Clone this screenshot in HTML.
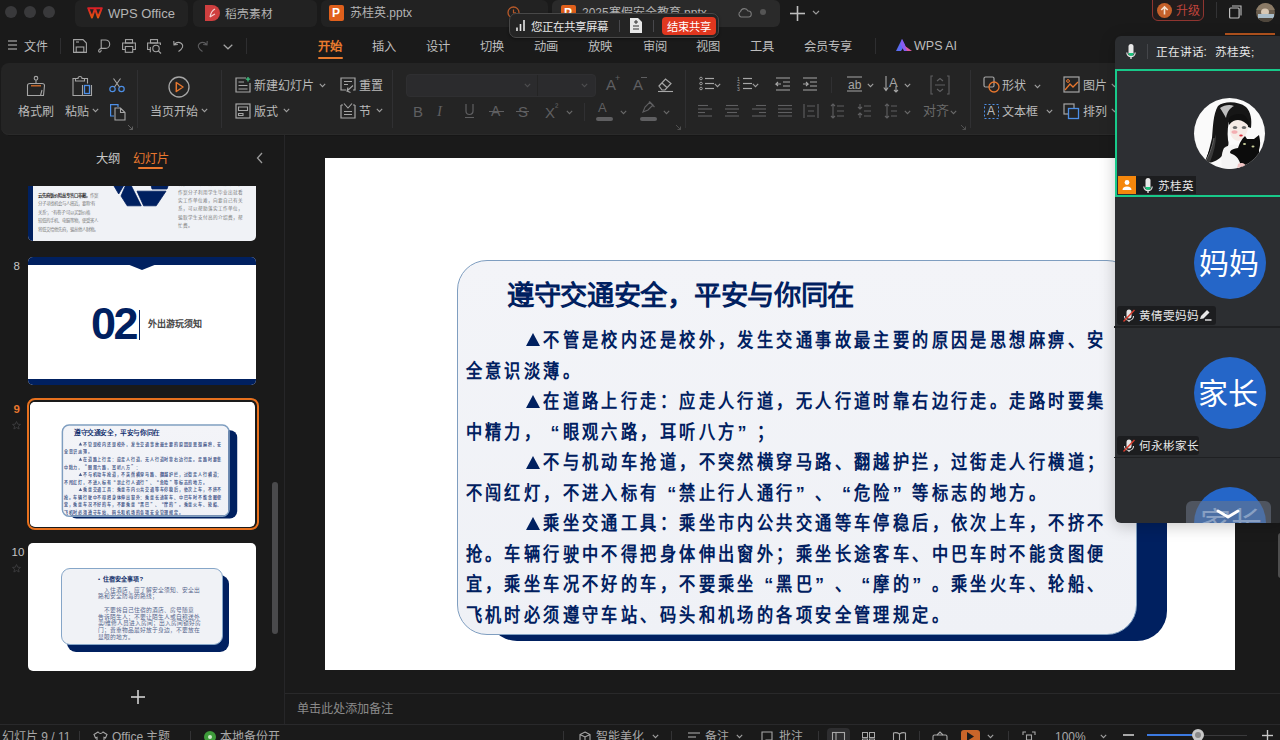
<!DOCTYPE html>
<html lang="zh-CN"><head><meta charset="utf-8">
<style>
*{box-sizing:border-box;margin:0;padding:0}
html,body{width:1280px;height:740px;overflow:hidden;background:#1a1a1a;font-family:"Liberation Sans",sans-serif;color:#c8c8c8}
.a{position:absolute}
.t{position:absolute;white-space:nowrap;line-height:1}
svg{position:absolute;overflow:visible}
.sl{position:absolute;left:0;top:0;width:910px;height:512px;background:#fff;overflow:hidden}
.ch{display:inline-block;text-align:left}
</style></head><body>
<div class="a" style="left:5px;top:6px;width:12px;height:12px;border-radius:50%;background:#39393b"></div><div class="a" style="left:24px;top:6px;width:12px;height:12px;border-radius:50%;background:#39393b"></div><div class="a" style="left:43px;top:6px;width:12px;height:12px;border-radius:50%;background:#39393b"></div><div class="a" style="left:75px;top:0px;width:113px;height:27px;background:#222222;border-radius:6px"></div><div class="a" style="left:193px;top:0px;width:124px;height:27px;background:#222222;border-radius:6px"></div><div class="a" style="left:321px;top:0px;width:227px;height:27px;background:#222222;border-radius:6px"></div><div class="a" style="left:552px;top:0px;width:228px;height:27px;background:#2a2a2a;border-radius:6px"></div><svg style="left:87px;top:7px;" width="16" height="12" viewBox="0 0 16 12" fill="none"><defs><linearGradient id="wg" x1="0" y1="0" x2="0" y2="1"><stop offset="0" stop-color="#d91f26"/><stop offset="1" stop-color="#e0560f"/></linearGradient></defs><path d="M1.2 1.2 H14.8 M1.2 1.2 L5 10.5 L8 1.6 M8 1.6 L11 10.5 L14.8 1.2" stroke="url(#wg)" stroke-width="2" stroke-linejoin="round" stroke-linecap="round"/></svg><div class="t" style="left:108px;top:7px;font-size:13px;color:#b4b4b4;font-weight:normal;">WPS Office</div><svg style="left:205px;top:5px;" width="15" height="16" viewBox="0 0 15 16" fill="none"><path d="M0 0 H7 A8 8 0 0 1 7 16 H0 Z" fill="#cf3f3f"/><path d="M5 12 Q6 6 10 4 M5 12 Q8 10 10 9" stroke="#f5d0d0" stroke-width="1.2"/></svg><div class="t" style="left:225px;top:8px;font-size:11.7px;color:#b4b4b4;font-weight:normal;">稻壳素材</div><div class="a" style="left:329px;top:5px;width:15px;height:16px;background:#e0601c;border-radius:2px"></div><div class="t" style="left:332px;top:7px;font-size:12px;color:#fff;font-weight:bold;">P</div><div class="t" style="left:350px;top:7px;font-size:12px;color:#b4b4b4;font-weight:normal;">苏桂英.pptx</div><svg style="left:507px;top:6px;" width="13" height="13" viewBox="0 0 13 13" fill="none"><circle cx="6.5" cy="6.5" r="5.5" stroke="#b85a2a" stroke-width="1.3"/><path d="M6.5 3.5 V6.8 H9" stroke="#b85a2a" stroke-width="1.2"/></svg><div class="a" style="left:561px;top:5px;width:15px;height:16px;background:#e0601c;border-radius:2px"></div><div class="t" style="left:564px;top:7px;font-size:12px;color:#fff;font-weight:bold;">P</div><div class="t" style="left:582px;top:7px;font-size:12px;color:#b4b4b4;font-weight:normal;">2025寒假安全教育.pptx</div><svg style="left:737px;top:7px;" width="15" height="11" viewBox="0 0 15 11" fill="none"><path d="M4 10 H11.5 A3 3 0 0 0 11 4 A4 4 0 0 0 3.5 4.5 A3 3 0 0 0 4 10 Z" stroke="#7a7a7a" stroke-width="1.1"/></svg><div class="a" style="left:760px;top:9px;width:6px;height:6px;border-radius:50%;background:#555"></div><svg style="left:790px;top:6px;" width="15" height="15" viewBox="0 0 15 15" fill="none"><line x1="7.5" y1="0" x2="7.5" y2="15" stroke="#bdbdbd" stroke-width="1.6"/><line x1="0" y1="7.5" x2="15" y2="7.5" stroke="#bdbdbd" stroke-width="1.6"/></svg><svg style="left:812px;top:10px;" width="8" height="5" viewBox="0 0 8 5" fill="none"><path d="M1 1 L4 4 L7 1" stroke="#9a9a9a" stroke-width="1.2"/></svg><div class="a" style="left:1152px;top:-6px;width:52px;height:27px;border:1.3px solid #8f3530;border-radius:6px;background:#221c1c"></div><div class="a" style="left:1157px;top:3px;width:15px;height:15px;border-radius:50%;background:#c4602a"></div><svg style="left:1159px;top:5px;" width="11" height="11" viewBox="0 0 11 11" fill="none"><path d="M5.5 9.5 V2 M2.3 5 L5.5 1.8 L8.7 5" stroke="#f3e0d0" stroke-width="1.6"/></svg><div class="t" style="left:1176px;top:4.5px;font-size:12px;color:#c0443c;font-weight:normal;">升级</div><div class="a" style="left:1216px;top:2px;width:1px;height:16px;background:#333335;"></div><svg style="left:1229px;top:5px;" width="13" height="14" viewBox="0 0 13 14" fill="none"><rect x="0.6" y="3" width="9.5" height="10" rx="1" stroke="#c0c0c0" stroke-width="1.2"/><path d="M3 1 H12 V10.5" stroke="#c0c0c0" stroke-width="1.1"/></svg><svg style="left:1256px;top:2.5px" width="19" height="19" viewBox="0 0 19 19"><defs><clipPath id="av"><circle cx="9.5" cy="9.5" r="9.5"/></clipPath></defs><g clip-path="url(#av)"><rect width="19" height="19" fill="#6b5e4e"/><rect y="0" width="19" height="7" fill="#8a7a66"/><ellipse cx="9" cy="9" rx="4" ry="3.5" fill="#d8c8b4"/><rect x="2" y="11" width="16" height="5" fill="#a9bcc8"/><rect y="15" width="19" height="4" fill="#4e463c"/></g></svg><svg style="left:8px;top:40px;" width="9" height="10" viewBox="0 0 9 10" fill="none"><line x1="0" y1="1" x2="9" y2="1" stroke="#a8a8a8" stroke-width="1.2"/><line x1="0" y1="5" x2="9" y2="5" stroke="#a8a8a8" stroke-width="1.2"/><line x1="0" y1="9" x2="9" y2="9" stroke="#a8a8a8" stroke-width="1.2"/></svg><div class="t" style="left:24px;top:41px;font-size:12px;color:#bdbdbd;font-weight:normal;">文件</div><div class="a" style="left:60px;top:38px;width:1px;height:16px;background:#2e2e30;"></div><svg style="left:73px;top:39px;" width="14" height="14" viewBox="0 0 14 14" fill="none"><path d="M0.6 0.6 H10 L13.4 4 V13.4 H0.6 Z" stroke="#a4a4a4" stroke-width="1.1"/><path d="M3 3 H6" stroke="#a4a4a4" stroke-width="1.1"/><rect x="3.2" y="8" width="7.6" height="5.4" stroke="#a4a4a4" stroke-width="1.1"/></svg><svg style="left:98px;top:39px;" width="13" height="14" viewBox="0 0 13 14" fill="none"><path d="M3.2 9.5 V1 H7.5 A4.2 4.2 0 0 1 7.5 9.4 H4.5 C1.5 9.4 0.3 11 0.7 12.3 C1.3 13.8 3.2 13.2 3.2 11" stroke="#a4a4a4" stroke-width="1.1"/></svg><svg style="left:122px;top:39px;" width="14" height="14" viewBox="0 0 14 14" fill="none"><rect x="3.5" y="0.6" width="7" height="3.4" stroke="#a4a4a4" stroke-width="1.1"/><path d="M3 10.5 H0.6 V4 H13.4 V10.5 H11" stroke="#a4a4a4" stroke-width="1.1"/><rect x="3.3" y="7.5" width="7.4" height="5.8" stroke="#a4a4a4" stroke-width="1.1"/></svg><svg style="left:147px;top:39px;" width="15" height="15" viewBox="0 0 15 15" fill="none"><rect x="3.5" y="0.6" width="7" height="3.4" stroke="#a4a4a4" stroke-width="1.1"/><path d="M3 10.5 H0.6 V4 H13.4 V6" stroke="#a4a4a4" stroke-width="1.1"/><path d="M3.3 13.3 V8" stroke="#a4a4a4" stroke-width="1.1"/><circle cx="9" cy="9.5" r="3.2" stroke="#a4a4a4" stroke-width="1.1"/><path d="M11.3 11.8 L14 14.5" stroke="#a4a4a4" stroke-width="1.2"/></svg><svg style="left:173px;top:40px;" width="11" height="12" viewBox="0 0 11 12" fill="none"><path d="M0.8 1 L1 5 L4.8 4.5 M1.2 4.6 C3 2.5 6 1.8 8.5 3.5 C10.8 5.5 10 8.5 5.5 11.5" stroke="#a4a4a4" stroke-width="1.1"/></svg><svg style="left:197px;top:40px;" width="11" height="12" viewBox="0 0 11 12" fill="none"><path d="M10.2 1 L10 5 L6.2 4.5 M9.8 4.6 C8 2.5 5 1.8 2.5 3.5 C0.2 5.5 1 8.5 5.5 11.5" stroke="#5c5c5e" stroke-width="1.1"/></svg><svg style="left:222.5px;top:43.5px;" width="10" height="6" viewBox="0 0 10 6" fill="none"><path d="M0.7 0.7 L5 4.8 L9.3 0.7" stroke="#a4a4a4" stroke-width="1.2"/></svg><div class="a" style="left:246px;top:38px;width:1px;height:16px;background:#2e2e30;"></div><div class="t" style="left:318px;top:41px;font-size:12.3px;color:#e87a2e;font-weight:bold;">开始</div><div class="t" style="left:372px;top:41px;font-size:12.3px;color:#bdbdbd;font-weight:normal;">插入</div><div class="t" style="left:426px;top:41px;font-size:12.3px;color:#bdbdbd;font-weight:normal;">设计</div><div class="t" style="left:480px;top:41px;font-size:12.3px;color:#bdbdbd;font-weight:normal;">切换</div><div class="t" style="left:534px;top:41px;font-size:12.3px;color:#bdbdbd;font-weight:normal;">动画</div><div class="t" style="left:588px;top:41px;font-size:12.3px;color:#bdbdbd;font-weight:normal;">放映</div><div class="t" style="left:643px;top:41px;font-size:12.3px;color:#bdbdbd;font-weight:normal;">审阅</div><div class="t" style="left:696px;top:41px;font-size:12.3px;color:#bdbdbd;font-weight:normal;">视图</div><div class="t" style="left:750px;top:41px;font-size:12.3px;color:#bdbdbd;font-weight:normal;">工具</div><div class="t" style="left:804px;top:41px;font-size:12.3px;color:#bdbdbd;font-weight:normal;">会员专享</div><div class="a" style="left:318px;top:57px;width:25px;height:2px;background:#e87a2e;border-radius:1px"></div><div class="a" style="left:875px;top:38px;width:1px;height:16px;background:#2e2e30;"></div><svg style="left:896px;top:39px;" width="16" height="12" viewBox="0 0 16 12" fill="none"><path d="M0 12 L6 0 L9 6 L5 12 Z" fill="#5b6cf0"/><path d="M6 0 L12 12 H8 L4.5 5 Z" fill="#8a5bf0"/><path d="M9 7 L16 12 H11 Z" fill="#e05aa0"/></svg><div class="t" style="left:914px;top:40px;font-size:12.5px;color:#bdbdbd;font-weight:normal;">WPS AI</div><div class="a" style="left:1px;top:63px;width:1300px;height:72px;background:#242424;border-radius:8px;box-shadow:inset 0 -1px 0 #2a2a2a"></div><div class="a" style="left:8px;top:135px;width:1280px;height:1px;background:#161616;"></div><div class="a" style="left:137px;top:70px;width:1px;height:58px;background:#303032;"></div><div class="a" style="left:221px;top:70px;width:1px;height:58px;background:#303032;"></div><div class="a" style="left:392px;top:70px;width:1px;height:58px;background:#303032;"></div><div class="a" style="left:685px;top:70px;width:1px;height:58px;background:#303032;"></div><div class="a" style="left:970px;top:70px;width:1px;height:58px;background:#303032;"></div><svg style="left:26px;top:76px;" width="20" height="21" viewBox="0 0 20 21" fill="none"><circle cx="10" cy="2.2" r="1.8" stroke="#a6a6a6" stroke-width="1.1"/><path d="M10 4 V7.5 M1.5 9.5 C1.5 8 2.5 7.5 4 7.5 H16 C17.5 7.5 18.5 8 18.5 9.5 L17.5 19.5 H1.5 Z M14.5 19.5 L16 14" stroke="#a6a6a6" stroke-width="1.1"/><path d="M5 9.8 H15" stroke="#e8772e" stroke-width="1.2"/></svg><div class="t" style="left:18px;top:105.5px;font-size:12px;color:#bababa;font-weight:normal;">格式刷</div><svg style="left:72px;top:76px;" width="21" height="21" viewBox="0 0 21 21" fill="none"><path d="M3.5 2.5 H1 V19.5 H10" stroke="#a6a6a6" stroke-width="1.1"/><path d="M3.5 2.5 H6 C6 1 7 0.5 8 0.5 C9 0.5 10 1 10 2.5 H12.5 V5 H3.5 Z" stroke="#a6a6a6" stroke-width="1.1"/><path d="M13 2.5 H15.5 V7.5" stroke="#a6a6a6" stroke-width="1.1"/><path d="M10.5 9 V19.5 H19.5 V9" stroke="#a6a6a6" stroke-width="1.1"/><rect x="12.5" y="9.5" width="5" height="8" stroke="#4d8fe6" stroke-width="1.3"/></svg><div class="t" style="left:65px;top:105.5px;font-size:12px;color:#bababa;font-weight:normal;">粘贴</div><svg style="left:92px;top:108px;" width="7" height="5" viewBox="0 0 7 5" fill="none"><path d="M0.8 0.8 L3.5 3.6 L6.2 0.8" stroke="#a0a0a0" stroke-width="1.1"/></svg><svg style="left:109px;top:78px;" width="16" height="15" viewBox="0 0 16 15" fill="none"><circle cx="3.5" cy="11" r="2.7" stroke="#4d8fe6" stroke-width="1.2"/><circle cx="12.5" cy="11" r="2.7" stroke="#4d8fe6" stroke-width="1.2"/><path d="M5.5 9 L11.5 0.5 M10.5 9 L4.5 0.5" stroke="#a6a6a6" stroke-width="1.1"/></svg><svg style="left:110px;top:104px;" width="16" height="17" viewBox="0 0 16 17" fill="none"><path d="M4 12 H0.6 V0.6 H8 V3" stroke="#4d8fe6" stroke-width="1.2"/><path d="M5 4 H10.5 L15 8.5 V16 H5 Z M10.5 4 V8.5 H15" stroke="#a6a6a6" stroke-width="1.1"/></svg><svg style="left:128px;top:125px;" width="5" height="5" viewBox="0 0 5 5" fill="none"><path d="M0 0 L4.5 4.5 M4.5 1.5 V4.5 H1.5" stroke="#666" stroke-width="0.9"/></svg><svg style="left:168px;top:76px;" width="22" height="22" viewBox="0 0 22 22" fill="none"><circle cx="11" cy="11" r="10" stroke="#a6a6a6" stroke-width="1.3"/><path d="M8.3 6.5 L15 11 L8.3 15.5 Z" stroke="#e8772e" stroke-width="1.5" stroke-linejoin="round"/></svg><div class="t" style="left:150px;top:105.5px;font-size:12px;color:#bababa;font-weight:normal;">当页开始</div><svg style="left:201px;top:108px;" width="7" height="5" viewBox="0 0 7 5" fill="none"><path d="M0.8 0.8 L3.5 3.6 L6.2 0.8" stroke="#a0a0a0" stroke-width="1.1"/></svg><svg style="left:235px;top:77px;" width="16" height="16" viewBox="0 0 16 16" fill="none"><path d="M11 1 H1 V15 H15 V6" stroke="#a6a6a6" stroke-width="1.2"/><path d="M3.5 5 H9 M3.5 8.5 H12.5 M3.5 12 H12.5" stroke="#a6a6a6" stroke-width="1.2"/><path d="M13 0 V4.5 M10.8 2.2 H15.2" stroke="#3fbf7f" stroke-width="1.3"/></svg><div class="t" style="left:254px;top:80px;font-size:12px;color:#bababa;font-weight:normal;">新建幻灯片</div><svg style="left:319px;top:83px;" width="7" height="5" viewBox="0 0 7 5" fill="none"><path d="M0.8 0.8 L3.5 3.6 L6.2 0.8" stroke="#a0a0a0" stroke-width="1.1"/></svg><svg style="left:235px;top:103px;" width="16" height="16" viewBox="0 0 16 16" fill="none"><rect x="1" y="1" width="14" height="14" stroke="#a6a6a6" stroke-width="1.2"/><path d="M3.5 4 H12.5 V7.5 H3.5 Z M3.5 10.5 H8 V12.5 H3.5 Z" stroke="#a6a6a6" stroke-width="1.1"/></svg><div class="t" style="left:254px;top:105.5px;font-size:12px;color:#bababa;font-weight:normal;">版式</div><svg style="left:283px;top:108px;" width="7" height="5" viewBox="0 0 7 5" fill="none"><path d="M0.8 0.8 L3.5 3.6 L6.2 0.8" stroke="#a0a0a0" stroke-width="1.1"/></svg><svg style="left:340px;top:77px;" width="16" height="16" viewBox="0 0 16 16" fill="none"><path d="M6 13 H1 V1 H15 V13 H13" stroke="#a6a6a6" stroke-width="1.2"/><path d="M4 4.5 H12 M4 7.5 H8" stroke="#a6a6a6" stroke-width="1.1"/><path d="M13 8.5 L7 14 L10.5 15.5 M7 14 L8 10.5" stroke="#a6a6a6" stroke-width="1.1"/></svg><div class="t" style="left:359px;top:80px;font-size:12px;color:#bababa;font-weight:normal;">重置</div><svg style="left:340px;top:103px;" width="16" height="16" viewBox="0 0 16 16" fill="none"><path d="M1 2 V15 H15 V2 M1 2 H3 M13 2 H15" stroke="#a6a6a6" stroke-width="1.2"/><path d="M4 0.5 L8 5 L12 0.5" stroke="#a6a6a6" stroke-width="1.1"/><path d="M4 8.5 H12 M4 11.5 H12" stroke="#a6a6a6" stroke-width="1.1"/></svg><div class="t" style="left:359px;top:105.5px;font-size:12px;color:#bababa;font-weight:normal;">节</div><svg style="left:376px;top:108px;" width="7" height="5" viewBox="0 0 7 5" fill="none"><path d="M0.8 0.8 L3.5 3.6 L6.2 0.8" stroke="#a0a0a0" stroke-width="1.1"/></svg><div class="a" style="left:406px;top:74px;width:190px;height:23px;background:#2b2b2d;border-radius:4px;border:1px solid #2f2f31"></div><div class="a" style="left:537px;top:75px;width:1px;height:21px;background:#242424;"></div><svg style="left:524px;top:83px;" width="7" height="5" viewBox="0 0 7 5" fill="none"><path d="M0.8 0.8 L3.5 3.6 L6.2 0.8" stroke="#4e4e50" stroke-width="1.1"/></svg><svg style="left:581px;top:83px;" width="7" height="5" viewBox="0 0 7 5" fill="none"><path d="M0.8 0.8 L3.5 3.6 L6.2 0.8" stroke="#4e4e50" stroke-width="1.1"/></svg><div class="t" style="left:606px;top:77px;font-size:15px;color:#5f5f61;font-weight:normal;">A</div><div class="t" style="left:615px;top:74px;font-size:9px;color:#5f5f61;font-weight:normal;">+</div><div class="t" style="left:633px;top:77px;font-size:15px;color:#5f5f61;font-weight:normal;">A</div><div class="a" style="left:641px;top:77px;width:6px;height:1px;background:#5f5f61;"></div><svg style="left:657px;top:77px;" width="17" height="15" viewBox="0 0 17 15" fill="none"><path d="M2 9 L8.5 2 L14 6.5 L8 13 H5 Z M5 6 L10.5 11" stroke="#a6a6a6" stroke-width="1.2"/><path d="M1 14.5 H16" stroke="#a6a6a6" stroke-width="1.1"/></svg><div class="t" style="left:413px;top:104px;font-size:15px;color:#5f5f61;font-weight:normal;">B</div><div class="t" style="left:437px;top:104px;font-size:15px;color:#5f5f61;font-weight:normal;font-style:italic;font-family:'Liberation Serif',serif">I</div><svg style="left:465px;top:104px;" width="9" height="15" viewBox="0 0 9 15" fill="none"><path d="M1 0 V7 A3.5 3.5 0 0 0 8 7 V0 M0 13.5 H9" stroke="#5f5f61" stroke-width="1.2"/></svg><div class="t" style="left:491px;top:104px;font-size:14px;color:#5f5f61;font-weight:normal;">A</div><div class="a" style="left:489px;top:111px;width:15px;height:1px;background:#5f5f61;"></div><div class="t" style="left:518px;top:104px;font-size:15px;color:#5f5f61;font-weight:normal;">S</div><div class="a" style="left:516px;top:111px;width:13px;height:1px;background:#5f5f61;"></div><div class="t" style="left:545px;top:105px;font-size:15px;color:#5f5f61;font-weight:normal;">X</div><div class="t" style="left:555px;top:102px;font-size:10px;color:#5f5f61;font-weight:normal;">²</div><svg style="left:566px;top:110px;" width="7" height="5" viewBox="0 0 7 5" fill="none"><path d="M0.8 0.8 L3.5 3.6 L6.2 0.8" stroke="#6a6a6a" stroke-width="1.1"/></svg><div class="a" style="left:584px;top:103px;width:1px;height:18px;background:#303032;"></div><div class="t" style="left:598px;top:101px;font-size:13px;color:#5f5f61;font-weight:normal;">A</div><div class="a" style="left:596px;top:117px;width:17px;height:4px;background:#5f5f61;border-radius:2px"></div><svg style="left:620px;top:110px;" width="7" height="5" viewBox="0 0 7 5" fill="none"><path d="M0.8 0.8 L3.5 3.6 L6.2 0.8" stroke="#6a6a6a" stroke-width="1.1"/></svg><svg style="left:640px;top:101px;" width="16" height="14" viewBox="0 0 16 14" fill="none"><path d="M3 11 L5 6 L10 1 L13 4 L8 9 Z M9 0.5 L14.5 6" stroke="#5f5f61" stroke-width="1.1"/></svg><div class="a" style="left:640px;top:117px;width:17px;height:4px;background:#5f5f61;border-radius:2px"></div><svg style="left:663px;top:110px;" width="7" height="5" viewBox="0 0 7 5" fill="none"><path d="M0.8 0.8 L3.5 3.6 L6.2 0.8" stroke="#6a6a6a" stroke-width="1.1"/></svg><svg style="left:676px;top:125px;" width="5" height="5" viewBox="0 0 5 5" fill="none"><path d="M0 0 L4.5 4.5 M4.5 1.5 V4.5 H1.5" stroke="#555" stroke-width="0.9"/></svg><svg style="left:699px;top:77px;" width="16" height="14" viewBox="0 0 16 14" fill="none"><circle cx="2" cy="1.5" r="1.3" stroke="#a6a6a6" stroke-width="0.9"/><path d="M6 1.5 H15" stroke="#a6a6a6" stroke-width="1.2"/><circle cx="2" cy="6.5" r="1.3" stroke="#a6a6a6" stroke-width="0.9"/><path d="M6 6.5 H15" stroke="#a6a6a6" stroke-width="1.2"/><circle cx="2" cy="11.5" r="1.3" stroke="#a6a6a6" stroke-width="0.9"/><path d="M6 11.5 H15" stroke="#a6a6a6" stroke-width="1.2"/></svg><svg style="left:714px;top:83px;" width="7" height="5" viewBox="0 0 7 5" fill="none"><path d="M0.8 0.8 L3.5 3.6 L6.2 0.8" stroke="#a0a0a0" stroke-width="1.1"/></svg><svg style="left:737px;top:77px;" width="16" height="14" viewBox="0 0 16 14" fill="none"><text x="0" y="4.0" font-size="5" fill="#a6a6a6" font-family="Liberation Sans">1</text><path d="M6 1.5 H15" stroke="#a6a6a6" stroke-width="1.2"/><text x="0" y="9.0" font-size="5" fill="#a6a6a6" font-family="Liberation Sans">2</text><path d="M6 6.5 H15" stroke="#a6a6a6" stroke-width="1.2"/><text x="0" y="14.0" font-size="5" fill="#a6a6a6" font-family="Liberation Sans">3</text><path d="M6 11.5 H15" stroke="#a6a6a6" stroke-width="1.2"/></svg><svg style="left:752px;top:83px;" width="7" height="5" viewBox="0 0 7 5" fill="none"><path d="M0.8 0.8 L3.5 3.6 L6.2 0.8" stroke="#a0a0a0" stroke-width="1.1"/></svg><svg style="left:775px;top:77px;" width="16" height="14" viewBox="0 0 16 14" fill="none"><path d="M1 1 H15 M8 5 H15 M8 9 H15 M1 13 H15 M6 7 H1 L3 5 M1 7 L3 9" stroke="#a6a6a6" stroke-width="1.1"/></svg><svg style="left:802px;top:77px;" width="16" height="14" viewBox="0 0 16 14" fill="none"><path d="M1 1 H15 M8 5 H15 M8 9 H15 M1 13 H15 M1 7 H6 L4 5 M6 7 L4 9" stroke="#a6a6a6" stroke-width="1.1"/></svg><div class="a" style="left:831px;top:77px;width:1px;height:16px;background:#303032;"></div><svg style="left:846px;top:76px;" width="17" height="16" viewBox="0 0 17 16" fill="none"><path d="M1 1 H16 M1 15 H16" stroke="#a6a6a6" stroke-width="1.1"/></svg><div class="t" style="left:848px;top:79px;font-size:12px;color:#a6a6a6;font-weight:normal;">ab</div><svg style="left:867px;top:83px;" width="7" height="5" viewBox="0 0 7 5" fill="none"><path d="M0.8 0.8 L3.5 3.6 L6.2 0.8" stroke="#a0a0a0" stroke-width="1.1"/></svg><svg style="left:883px;top:75px;" width="17" height="18" viewBox="0 0 17 18" fill="none"><path d="M3 1 V15 M0.8 12.5 L3 15.5 L5.2 12.5" stroke="#a6a6a6" stroke-width="1.1"/><path d="M13 11 V17 M11 15 L13 17 L15 15" stroke="#a6a6a6" stroke-width="1.1"/></svg><div class="t" style="left:889px;top:76px;font-size:13px;color:#a6a6a6;font-weight:normal;">A</div><svg style="left:904px;top:83px;" width="7" height="5" viewBox="0 0 7 5" fill="none"><path d="M0.8 0.8 L3.5 3.6 L6.2 0.8" stroke="#a0a0a0" stroke-width="1.1"/></svg><svg style="left:930px;top:75px;" width="20" height="20" viewBox="0 0 20 20" fill="none"><path d="M3 1 H1 V19 H3 M17 1 H19 V19 H17 M5 10 H15 M7 6 L10 3.5 L13 6 M7 14 L10 16.5 L13 14" stroke="#5f5f61" stroke-width="1.1"/></svg><svg style="left:697px;top:104px;" width="16" height="14" viewBox="0 0 16 14" fill="none"><path d="M1 1.5 H11" stroke="#5f5f61" stroke-width="1.1"/><path d="M1 5.0 H15" stroke="#5f5f61" stroke-width="1.1"/><path d="M1 8.5 H8" stroke="#5f5f61" stroke-width="1.1"/><path d="M1 12.0 H15" stroke="#5f5f61" stroke-width="1.1"/></svg><svg style="left:724px;top:104px;" width="16" height="14" viewBox="0 0 16 14" fill="none"><path d="M2 1.5 H14" stroke="#5f5f61" stroke-width="1.1"/><path d="M1 5.0 H15" stroke="#5f5f61" stroke-width="1.1"/><path d="M3 8.5 H13" stroke="#5f5f61" stroke-width="1.1"/><path d="M1 12.0 H15" stroke="#5f5f61" stroke-width="1.1"/></svg><svg style="left:751px;top:104px;" width="16" height="14" viewBox="0 0 16 14" fill="none"><path d="M5 1.5 H15" stroke="#5f5f61" stroke-width="1.1"/><path d="M1 5.0 H15" stroke="#5f5f61" stroke-width="1.1"/><path d="M8 8.5 H15" stroke="#5f5f61" stroke-width="1.1"/><path d="M1 12.0 H15" stroke="#5f5f61" stroke-width="1.1"/></svg><svg style="left:777px;top:104px;" width="16" height="14" viewBox="0 0 16 14" fill="none"><path d="M1 1.5 H15" stroke="#5f5f61" stroke-width="1.1"/><path d="M1 5.0 H15" stroke="#5f5f61" stroke-width="1.1"/><path d="M1 8.5 H15" stroke="#5f5f61" stroke-width="1.1"/><path d="M1 12.0 H15" stroke="#5f5f61" stroke-width="1.1"/></svg><svg style="left:803px;top:103px;" width="16" height="16" viewBox="0 0 16 16" fill="none"><path d="M1 1 V15 M15 1 V15 M4 3 H12 M4 13 H12 M5 8 H11" stroke="#5f5f61" stroke-width="1.1"/></svg><svg style="left:830px;top:103px;" width="14" height="16" viewBox="0 0 14 16" fill="none"><path d="M3 1 V15 M1 3 L3 1 L5 3 M1 13 L3 15 L5 13 M7 3 H14 M7 8 H14 M7 13 H14" stroke="#5f5f61" stroke-width="1.1"/></svg><svg style="left:857px;top:103px;" width="14" height="16" viewBox="0 0 14 16" fill="none"><path d="M3 1 V6 M1 4 L3 6 L5 4 M3 10 V15 M1 12 L3 10 L5 12 M7 3 H14 M7 8 H14 M7 13 H14" stroke="#5f5f61" stroke-width="1.1"/></svg><svg style="left:884px;top:103px;" width="14" height="16" viewBox="0 0 14 16" fill="none"><path d="M3 1 V15 M1 3 L3 1 L5 3 M1 13 L3 15 L5 13 M7 3 H13 M7 8 H13 M7 13 H13" stroke="#5f5f61" stroke-width="1.1"/></svg><svg style="left:904px;top:110px;" width="7" height="5" viewBox="0 0 7 5" fill="none"><path d="M0.8 0.8 L3.5 3.6 L6.2 0.8" stroke="#6a6a6a" stroke-width="1.1"/></svg><div class="t" style="left:923px;top:104px;font-size:13px;color:#6a6a6a;font-weight:normal;">对齐</div><svg style="left:950px;top:110px;" width="7" height="5" viewBox="0 0 7 5" fill="none"><path d="M0.8 0.8 L3.5 3.6 L6.2 0.8" stroke="#6a6a6a" stroke-width="1.1"/></svg><svg style="left:961px;top:125px;" width="5" height="5" viewBox="0 0 5 5" fill="none"><path d="M0 0 L4.5 4.5 M4.5 1.5 V4.5 H1.5" stroke="#555" stroke-width="0.9"/></svg><svg style="left:983px;top:76px;" width="17" height="17" viewBox="0 0 17 17" fill="none"><rect x="1" y="1" width="10" height="10" rx="1.5" stroke="#a6a6a6" stroke-width="1.2"/><circle cx="11" cy="11" r="5" stroke="#e8772e" stroke-width="1.3"/></svg><div class="t" style="left:1002px;top:80px;font-size:12px;color:#bababa;font-weight:normal;">形状</div><svg style="left:1034px;top:84px;" width="7" height="5" viewBox="0 0 7 5" fill="none"><path d="M0.8 0.8 L3.5 3.6 L6.2 0.8" stroke="#a0a0a0" stroke-width="1.1"/></svg><svg style="left:983px;top:103px;" width="17" height="17" viewBox="0 0 17 17" fill="none"><rect x="1.5" y="1.5" width="14" height="14" stroke="#4d8fe6" stroke-width="1" stroke-dasharray="2 2"/></svg><div class="t" style="left:987px;top:105px;font-size:12px;color:#bababa;font-weight:normal;">A</div><div class="t" style="left:1002px;top:105.5px;font-size:12px;color:#bababa;font-weight:normal;">文本框</div><svg style="left:1046px;top:109px;" width="7" height="5" viewBox="0 0 7 5" fill="none"><path d="M0.8 0.8 L3.5 3.6 L6.2 0.8" stroke="#a0a0a0" stroke-width="1.1"/></svg><svg style="left:1063px;top:76px;" width="17" height="17" viewBox="0 0 17 17" fill="none"><rect x="1" y="1" width="15" height="15" stroke="#a6a6a6" stroke-width="1.2"/><path d="M2 14 L7 8 L10 11 L15 6" stroke="#e8772e" stroke-width="1.3"/><circle cx="5" cy="5" r="1.4" stroke="#e8772e" stroke-width="1"/></svg><div class="t" style="left:1083px;top:80px;font-size:12px;color:#bababa;font-weight:normal;">图片</div><svg style="left:1111px;top:83px;" width="7" height="5" viewBox="0 0 7 5" fill="none"><path d="M0.8 0.8 L3.5 3.6 L6.2 0.8" stroke="#a0a0a0" stroke-width="1.1"/></svg><svg style="left:1063px;top:103px;" width="17" height="17" viewBox="0 0 17 17" fill="none"><rect x="1" y="1" width="10" height="10" stroke="#a6a6a6" stroke-width="1.2"/><rect x="5.5" y="5.5" width="10" height="10" stroke="#4d8fe6" stroke-width="1.3" fill="#242424"/></svg><div class="t" style="left:1083px;top:105.5px;font-size:12px;color:#bababa;font-weight:normal;">排列</div><svg style="left:1111px;top:108px;" width="7" height="5" viewBox="0 0 7 5" fill="none"><path d="M0.8 0.8 L3.5 3.6 L6.2 0.8" stroke="#a0a0a0" stroke-width="1.1"/></svg><div class="t" style="left:96px;top:153px;font-size:12.3px;color:#c8c8c8;font-weight:normal;">大纲</div><div class="t" style="left:133px;top:153px;font-size:12.3px;color:#e8772e;font-weight:normal;">幻灯片</div><div class="a" style="left:138px;top:167px;width:25px;height:2px;background:#e8772e;border-radius:1px"></div><svg style="left:256px;top:152px;" width="7" height="12" viewBox="0 0 7 12" fill="none"><path d="M6 1 L1.5 6 L6 11" stroke="#9a9a9a" stroke-width="1.3"/></svg><div class="a" style="left:284px;top:135px;width:1px;height:590px;background:#262628;"></div><div class="a" style="left:0;top:186px;width:284px;height:538px;overflow:hidden"><div class="a" style="left:28px;top:-80px;width:228px;height:135px;background:#f0f2f6;border-radius:5px;overflow:hidden"><div class="a" style="left:0;top:0;width:5px;height:135px;background:#002060"></div><svg style="left:0;top:0" width="228" height="135" viewBox="0 0 228 135"><path d="M86 80 L95.4 80 L90.7 88 Z M97.3 80 L103.4 80 L113.2 99.8 L99.2 99.8 L93 90 Z M109 85.2 L138 85.2 L128.2 99.8 L115.6 99.8 Z M123 79 L140.4 79 L139 83 L124 83 Z" fill="#002060" stroke="#002060" stroke-width="0.8" stroke-linejoin="round"/></svg><div class="t" style="left:10px;top:96.0px;font-size:4.4px;color:#7a7a7a;letter-spacing:0px">分子寻找机会与人搭近，要称“有</div><div class="t" style="left:10px;top:104.5px;font-size:4.4px;color:#7a7a7a;letter-spacing:0px">关系”，“有卷子”可以买到价格</div><div class="t" style="left:10px;top:113.0px;font-size:4.4px;color:#7a7a7a;letter-spacing:0px">较低的手机、电脑等物，使受害人</div><div class="t" style="left:10px;top:121.5px;font-size:4.4px;color:#7a7a7a;letter-spacing:0px">将低交给他先府，骗丛他人财物。</div><div class="t" style="left:10px;top:87.5px;font-size:4.4px;color:#333;font-weight:bold;letter-spacing:0px">云先府饭价险丛专答口非敝。<span style="font-weight:normal;color:#7a7a7a">作案</span></div><div class="t" style="left:150px;top:84.5px;font-size:4.6px;color:#7a7a7a;letter-spacing:0px">作案分子利用学生毕业出就看</div><div class="t" style="left:150px;top:92.9px;font-size:4.6px;color:#7a7a7a;letter-spacing:0px">实工作单位难，向要自己有关</div><div class="t" style="left:150px;top:101.3px;font-size:4.6px;color:#7a7a7a;letter-spacing:0px">系，可以帮助落实工作单位，</div><div class="t" style="left:150px;top:109.7px;font-size:4.6px;color:#7a7a7a;letter-spacing:0px">骗取学生支付高的介绍费，帮</div><div class="t" style="left:150px;top:118.1px;font-size:4.6px;color:#7a7a7a;letter-spacing:0px">忙费。</div><div class="t" style="left:150px;top:76px;font-size:4.6px;color:#555;letter-spacing:0px">者，可以帮助落实工作单位，</div></div><div class="a" style="left:28px;top:71px;width:228px;height:128px;background:#fff;border-radius:5px;overflow:hidden"><div class="a" style="left:0;top:0;width:228px;height:8px;background:#002060"></div><svg style="left:99px;top:7px" width="30" height="7" viewBox="0 0 30 7"><path d="M0 0 H30 L15 6 Z" fill="#002060"/></svg><div class="a" style="left:0;top:122px;width:228px;height:6px;background:#002060"></div><div class="t" style="left:63px;top:43.5px;font-size:45px;font-weight:bold;color:#002060;letter-spacing:-2.5px">02</div><div class="a" style="left:111px;top:53px;width:1.3px;height:30px;background:#002060"></div><div class="t" style="left:120px;top:63px;font-size:9px;font-weight:bold;color:#444">外出游玩须知</div></div><div class="t" style="left:13.5px;top:74.5px;font-size:11.5px;color:#c4c4c4;font-weight:normal;">8</div><div class="a" style="left:26.5px;top:212px;width:232px;height:132px;border:2.5px solid #e8711e;border-radius:8px"></div><div class="a" style="left:30px;top:215.5px;width:225px;height:125px;background:#fff;border-radius:5px;overflow:hidden"><div style="position:absolute;left:-1.5px;top:-2.5px;width:910px;height:512px;transform:scale(0.2473);transform-origin:0 0"><div class="sl"><div class="a" style="left:162px;top:126px;width:680px;height:357px;border-radius:30px;background:#002060"></div><div class="a" style="left:132px;top:102px;width:680px;height:375px;border-radius:30px;background:linear-gradient(180deg,#f3f4f8,#eff1f6);border:6px solid #7f9ec0"></div><div class="t" style="left:182px;top:123.5px;font-size:27.3px;font-weight:bold;color:#0a2868"><span class="ch" style="width:26.7px;transform:scale(1,1);transform-origin:12.7px 60%">遵</span><span class="ch" style="width:26.7px;transform:scale(1,1);transform-origin:12.7px 60%">守</span><span class="ch" style="width:26.7px;transform:scale(1,1);transform-origin:12.7px 60%">交</span><span class="ch" style="width:26.7px;transform:scale(1,1);transform-origin:12.7px 60%">通</span><span class="ch" style="width:26.7px;transform:scale(1,1);transform-origin:12.7px 60%">安</span><span class="ch" style="width:26.7px;transform:scale(1,1);transform-origin:12.7px 60%">全</span><span class="ch" style="width:26.7px;transform:scale(1,1);transform-origin:12.7px 60%">，</span><span class="ch" style="width:26.7px;transform:scale(1,1);transform-origin:12.7px 60%">平</span><span class="ch" style="width:26.7px;transform:scale(1,1);transform-origin:12.7px 60%">安</span><span class="ch" style="width:26.7px;transform:scale(1,1);transform-origin:12.7px 60%">与</span><span class="ch" style="width:26.7px;transform:scale(1,1);transform-origin:12.7px 60%">你</span><span class="ch" style="width:26.7px;transform:scale(1,1);transform-origin:12.7px 60%">同</span><span class="ch" style="width:26.7px;transform:scale(1,1);transform-origin:12.7px 60%">在</span></div><div class="t" style="left:197.78px;top:174.00px;font-size:18px;font-weight:bold;color:#4a5d8c"><span class="ch" style="width:19.425px;position:relative">　<span style="position:absolute;left:3.58px;top:1.44px;width:0;height:0;border-left:7.20px solid transparent;border-right:7.20px solid transparent;border-bottom:13.50px solid #4a5d8c"></span></span><span class="ch" style="width:19.425px;transform:scale(0.9,1.06);transform-origin:8.5px 60%">不</span><span class="ch" style="width:19.425px;transform:scale(0.9,1.06);transform-origin:8.5px 60%">管</span><span class="ch" style="width:19.425px;transform:scale(0.9,1.06);transform-origin:8.5px 60%">是</span><span class="ch" style="width:19.425px;transform:scale(0.9,1.06);transform-origin:8.5px 60%">校</span><span class="ch" style="width:19.425px;transform:scale(0.9,1.06);transform-origin:8.5px 60%">内</span><span class="ch" style="width:19.425px;transform:scale(0.9,1.06);transform-origin:8.5px 60%">还</span><span class="ch" style="width:19.425px;transform:scale(0.9,1.06);transform-origin:8.5px 60%">是</span><span class="ch" style="width:19.425px;transform:scale(0.9,1.06);transform-origin:8.5px 60%">校</span><span class="ch" style="width:19.425px;transform:scale(0.9,1.06);transform-origin:8.5px 60%">外</span><span class="ch" style="width:19.425px;transform:scale(0.9,1.06);transform-origin:8.5px 60%">，</span><span class="ch" style="width:19.425px;transform:scale(0.9,1.06);transform-origin:8.5px 60%">发</span><span class="ch" style="width:19.425px;transform:scale(0.9,1.06);transform-origin:8.5px 60%">生</span><span class="ch" style="width:19.425px;transform:scale(0.9,1.06);transform-origin:8.5px 60%">交</span><span class="ch" style="width:19.425px;transform:scale(0.9,1.06);transform-origin:8.5px 60%">通</span><span class="ch" style="width:19.425px;transform:scale(0.9,1.06);transform-origin:8.5px 60%">事</span><span class="ch" style="width:19.425px;transform:scale(0.9,1.06);transform-origin:8.5px 60%">故</span><span class="ch" style="width:19.425px;transform:scale(0.9,1.06);transform-origin:8.5px 60%">最</span><span class="ch" style="width:19.425px;transform:scale(0.9,1.06);transform-origin:8.5px 60%">主</span><span class="ch" style="width:19.425px;transform:scale(0.9,1.06);transform-origin:8.5px 60%">要</span><span class="ch" style="width:19.425px;transform:scale(0.9,1.06);transform-origin:8.5px 60%">的</span><span class="ch" style="width:19.425px;transform:scale(0.9,1.06);transform-origin:8.5px 60%">原</span><span class="ch" style="width:19.425px;transform:scale(0.9,1.06);transform-origin:8.5px 60%">因</span><span class="ch" style="width:19.425px;transform:scale(0.9,1.06);transform-origin:8.5px 60%">是</span><span class="ch" style="width:19.425px;transform:scale(0.9,1.06);transform-origin:8.5px 60%">思</span><span class="ch" style="width:19.425px;transform:scale(0.9,1.06);transform-origin:8.5px 60%">想</span><span class="ch" style="width:19.425px;transform:scale(0.9,1.06);transform-origin:8.5px 60%">麻</span><span class="ch" style="width:19.425px;transform:scale(0.9,1.06);transform-origin:8.5px 60%">痹</span><span class="ch" style="width:19.425px;transform:scale(0.9,1.06);transform-origin:8.5px 60%">、</span><span class="ch" style="width:19.425px;transform:scale(0.9,1.06);transform-origin:8.5px 60%">安</span></div><div class="t" style="left:139.50px;top:204.56px;font-size:18px;font-weight:bold;color:#4a5d8c"><span class="ch" style="width:19.425px;transform:scale(0.9,1.06);transform-origin:8.5px 60%">全</span><span class="ch" style="width:19.425px;transform:scale(0.9,1.06);transform-origin:8.5px 60%">意</span><span class="ch" style="width:19.425px;transform:scale(0.9,1.06);transform-origin:8.5px 60%">识</span><span class="ch" style="width:19.425px;transform:scale(0.9,1.06);transform-origin:8.5px 60%">淡</span><span class="ch" style="width:19.425px;transform:scale(0.9,1.06);transform-origin:8.5px 60%">薄</span><span class="ch" style="width:19.425px;transform:scale(0.9,1.06);transform-origin:8.5px 60%">。</span></div><div class="t" style="left:197.78px;top:235.12px;font-size:18px;font-weight:bold;color:#4a5d8c"><span class="ch" style="width:19.425px;position:relative">　<span style="position:absolute;left:3.58px;top:1.44px;width:0;height:0;border-left:7.20px solid transparent;border-right:7.20px solid transparent;border-bottom:13.50px solid #4a5d8c"></span></span><span class="ch" style="width:19.425px;transform:scale(0.9,1.06);transform-origin:8.5px 60%">在</span><span class="ch" style="width:19.425px;transform:scale(0.9,1.06);transform-origin:8.5px 60%">道</span><span class="ch" style="width:19.425px;transform:scale(0.9,1.06);transform-origin:8.5px 60%">路</span><span class="ch" style="width:19.425px;transform:scale(0.9,1.06);transform-origin:8.5px 60%">上</span><span class="ch" style="width:19.425px;transform:scale(0.9,1.06);transform-origin:8.5px 60%">行</span><span class="ch" style="width:19.425px;transform:scale(0.9,1.06);transform-origin:8.5px 60%">走</span><span class="ch" style="width:19.425px;transform:scale(0.9,1.06);transform-origin:8.5px 60%">：</span><span class="ch" style="width:19.425px;transform:scale(0.9,1.06);transform-origin:8.5px 60%">应</span><span class="ch" style="width:19.425px;transform:scale(0.9,1.06);transform-origin:8.5px 60%">走</span><span class="ch" style="width:19.425px;transform:scale(0.9,1.06);transform-origin:8.5px 60%">人</span><span class="ch" style="width:19.425px;transform:scale(0.9,1.06);transform-origin:8.5px 60%">行</span><span class="ch" style="width:19.425px;transform:scale(0.9,1.06);transform-origin:8.5px 60%">道</span><span class="ch" style="width:19.425px;transform:scale(0.9,1.06);transform-origin:8.5px 60%">，</span><span class="ch" style="width:19.425px;transform:scale(0.9,1.06);transform-origin:8.5px 60%">无</span><span class="ch" style="width:19.425px;transform:scale(0.9,1.06);transform-origin:8.5px 60%">人</span><span class="ch" style="width:19.425px;transform:scale(0.9,1.06);transform-origin:8.5px 60%">行</span><span class="ch" style="width:19.425px;transform:scale(0.9,1.06);transform-origin:8.5px 60%">道</span><span class="ch" style="width:19.425px;transform:scale(0.9,1.06);transform-origin:8.5px 60%">时</span><span class="ch" style="width:19.425px;transform:scale(0.9,1.06);transform-origin:8.5px 60%">靠</span><span class="ch" style="width:19.425px;transform:scale(0.9,1.06);transform-origin:8.5px 60%">右</span><span class="ch" style="width:19.425px;transform:scale(0.9,1.06);transform-origin:8.5px 60%">边</span><span class="ch" style="width:19.425px;transform:scale(0.9,1.06);transform-origin:8.5px 60%">行</span><span class="ch" style="width:19.425px;transform:scale(0.9,1.06);transform-origin:8.5px 60%">走</span><span class="ch" style="width:19.425px;transform:scale(0.9,1.06);transform-origin:8.5px 60%">。</span><span class="ch" style="width:19.425px;transform:scale(0.9,1.06);transform-origin:8.5px 60%">走</span><span class="ch" style="width:19.425px;transform:scale(0.9,1.06);transform-origin:8.5px 60%">路</span><span class="ch" style="width:19.425px;transform:scale(0.9,1.06);transform-origin:8.5px 60%">时</span><span class="ch" style="width:19.425px;transform:scale(0.9,1.06);transform-origin:8.5px 60%">要</span><span class="ch" style="width:19.425px;transform:scale(0.9,1.06);transform-origin:8.5px 60%">集</span></div><div class="t" style="left:139.50px;top:265.68px;font-size:18px;font-weight:bold;color:#4a5d8c"><span class="ch" style="width:19.425px;transform:scale(0.9,1.06);transform-origin:8.5px 60%">中</span><span class="ch" style="width:19.425px;transform:scale(0.9,1.06);transform-origin:8.5px 60%">精</span><span class="ch" style="width:19.425px;transform:scale(0.9,1.06);transform-origin:8.5px 60%">力</span><span class="ch" style="width:19.425px;transform:scale(0.9,1.06);transform-origin:8.5px 60%">，</span><span class="ch" style="width:19.425px;text-align:right;padding-right:2px">“</span><span class="ch" style="width:19.425px;transform:scale(0.9,1.06);transform-origin:8.5px 60%">眼</span><span class="ch" style="width:19.425px;transform:scale(0.9,1.06);transform-origin:8.5px 60%">观</span><span class="ch" style="width:19.425px;transform:scale(0.9,1.06);transform-origin:8.5px 60%">六</span><span class="ch" style="width:19.425px;transform:scale(0.9,1.06);transform-origin:8.5px 60%">路</span><span class="ch" style="width:19.425px;transform:scale(0.9,1.06);transform-origin:8.5px 60%">，</span><span class="ch" style="width:19.425px;transform:scale(0.9,1.06);transform-origin:8.5px 60%">耳</span><span class="ch" style="width:19.425px;transform:scale(0.9,1.06);transform-origin:8.5px 60%">听</span><span class="ch" style="width:19.425px;transform:scale(0.9,1.06);transform-origin:8.5px 60%">八</span><span class="ch" style="width:19.425px;transform:scale(0.9,1.06);transform-origin:8.5px 60%">方</span><span class="ch" style="width:19.425px;padding-left:1px">”</span><span class="ch" style="width:19.425px;transform:scale(0.9,1.06);transform-origin:8.5px 60%">；</span></div><div class="t" style="left:197.78px;top:296.24px;font-size:18px;font-weight:bold;color:#4a5d8c"><span class="ch" style="width:19.425px;position:relative">　<span style="position:absolute;left:3.58px;top:1.44px;width:0;height:0;border-left:7.20px solid transparent;border-right:7.20px solid transparent;border-bottom:13.50px solid #4a5d8c"></span></span><span class="ch" style="width:19.425px;transform:scale(0.9,1.06);transform-origin:8.5px 60%">不</span><span class="ch" style="width:19.425px;transform:scale(0.9,1.06);transform-origin:8.5px 60%">与</span><span class="ch" style="width:19.425px;transform:scale(0.9,1.06);transform-origin:8.5px 60%">机</span><span class="ch" style="width:19.425px;transform:scale(0.9,1.06);transform-origin:8.5px 60%">动</span><span class="ch" style="width:19.425px;transform:scale(0.9,1.06);transform-origin:8.5px 60%">车</span><span class="ch" style="width:19.425px;transform:scale(0.9,1.06);transform-origin:8.5px 60%">抢</span><span class="ch" style="width:19.425px;transform:scale(0.9,1.06);transform-origin:8.5px 60%">道</span><span class="ch" style="width:19.425px;transform:scale(0.9,1.06);transform-origin:8.5px 60%">，</span><span class="ch" style="width:19.425px;transform:scale(0.9,1.06);transform-origin:8.5px 60%">不</span><span class="ch" style="width:19.425px;transform:scale(0.9,1.06);transform-origin:8.5px 60%">突</span><span class="ch" style="width:19.425px;transform:scale(0.9,1.06);transform-origin:8.5px 60%">然</span><span class="ch" style="width:19.425px;transform:scale(0.9,1.06);transform-origin:8.5px 60%">横</span><span class="ch" style="width:19.425px;transform:scale(0.9,1.06);transform-origin:8.5px 60%">穿</span><span class="ch" style="width:19.425px;transform:scale(0.9,1.06);transform-origin:8.5px 60%">马</span><span class="ch" style="width:19.425px;transform:scale(0.9,1.06);transform-origin:8.5px 60%">路</span><span class="ch" style="width:19.425px;transform:scale(0.9,1.06);transform-origin:8.5px 60%">、</span><span class="ch" style="width:19.425px;transform:scale(0.9,1.06);transform-origin:8.5px 60%">翻</span><span class="ch" style="width:19.425px;transform:scale(0.9,1.06);transform-origin:8.5px 60%">越</span><span class="ch" style="width:19.425px;transform:scale(0.9,1.06);transform-origin:8.5px 60%">护</span><span class="ch" style="width:19.425px;transform:scale(0.9,1.06);transform-origin:8.5px 60%">拦</span><span class="ch" style="width:19.425px;transform:scale(0.9,1.06);transform-origin:8.5px 60%">，</span><span class="ch" style="width:19.425px;transform:scale(0.9,1.06);transform-origin:8.5px 60%">过</span><span class="ch" style="width:19.425px;transform:scale(0.9,1.06);transform-origin:8.5px 60%">街</span><span class="ch" style="width:19.425px;transform:scale(0.9,1.06);transform-origin:8.5px 60%">走</span><span class="ch" style="width:19.425px;transform:scale(0.9,1.06);transform-origin:8.5px 60%">人</span><span class="ch" style="width:19.425px;transform:scale(0.9,1.06);transform-origin:8.5px 60%">行</span><span class="ch" style="width:19.425px;transform:scale(0.9,1.06);transform-origin:8.5px 60%">横</span><span class="ch" style="width:19.425px;transform:scale(0.9,1.06);transform-origin:8.5px 60%">道</span><span class="ch" style="width:19.425px;transform:scale(0.9,1.06);transform-origin:8.5px 60%">；</span></div><div class="t" style="left:139.50px;top:326.80px;font-size:18px;font-weight:bold;color:#4a5d8c"><span class="ch" style="width:19.425px;transform:scale(0.9,1.06);transform-origin:8.5px 60%">不</span><span class="ch" style="width:19.425px;transform:scale(0.9,1.06);transform-origin:8.5px 60%">闯</span><span class="ch" style="width:19.425px;transform:scale(0.9,1.06);transform-origin:8.5px 60%">红</span><span class="ch" style="width:19.425px;transform:scale(0.9,1.06);transform-origin:8.5px 60%">灯</span><span class="ch" style="width:19.425px;transform:scale(0.9,1.06);transform-origin:8.5px 60%">，</span><span class="ch" style="width:19.425px;transform:scale(0.9,1.06);transform-origin:8.5px 60%">不</span><span class="ch" style="width:19.425px;transform:scale(0.9,1.06);transform-origin:8.5px 60%">进</span><span class="ch" style="width:19.425px;transform:scale(0.9,1.06);transform-origin:8.5px 60%">入</span><span class="ch" style="width:19.425px;transform:scale(0.9,1.06);transform-origin:8.5px 60%">标</span><span class="ch" style="width:19.425px;transform:scale(0.9,1.06);transform-origin:8.5px 60%">有</span><span class="ch" style="width:19.425px;text-align:right;padding-right:2px">“</span><span class="ch" style="width:19.425px;transform:scale(0.9,1.06);transform-origin:8.5px 60%">禁</span><span class="ch" style="width:19.425px;transform:scale(0.9,1.06);transform-origin:8.5px 60%">止</span><span class="ch" style="width:19.425px;transform:scale(0.9,1.06);transform-origin:8.5px 60%">行</span><span class="ch" style="width:19.425px;transform:scale(0.9,1.06);transform-origin:8.5px 60%">人</span><span class="ch" style="width:19.425px;transform:scale(0.9,1.06);transform-origin:8.5px 60%">通</span><span class="ch" style="width:19.425px;transform:scale(0.9,1.06);transform-origin:8.5px 60%">行</span><span class="ch" style="width:19.425px;padding-left:1px">”</span><span class="ch" style="width:19.425px;transform:scale(0.9,1.06);transform-origin:8.5px 60%">、</span><span class="ch" style="width:19.425px;text-align:right;padding-right:2px">“</span><span class="ch" style="width:19.425px;transform:scale(0.9,1.06);transform-origin:8.5px 60%">危</span><span class="ch" style="width:19.425px;transform:scale(0.9,1.06);transform-origin:8.5px 60%">险</span><span class="ch" style="width:19.425px;padding-left:1px">”</span><span class="ch" style="width:19.425px;transform:scale(0.9,1.06);transform-origin:8.5px 60%">等</span><span class="ch" style="width:19.425px;transform:scale(0.9,1.06);transform-origin:8.5px 60%">标</span><span class="ch" style="width:19.425px;transform:scale(0.9,1.06);transform-origin:8.5px 60%">志</span><span class="ch" style="width:19.425px;transform:scale(0.9,1.06);transform-origin:8.5px 60%">的</span><span class="ch" style="width:19.425px;transform:scale(0.9,1.06);transform-origin:8.5px 60%">地</span><span class="ch" style="width:19.425px;transform:scale(0.9,1.06);transform-origin:8.5px 60%">方</span><span class="ch" style="width:19.425px;transform:scale(0.9,1.06);transform-origin:8.5px 60%">。</span></div><div class="t" style="left:197.78px;top:357.36px;font-size:18px;font-weight:bold;color:#4a5d8c"><span class="ch" style="width:19.425px;position:relative">　<span style="position:absolute;left:3.58px;top:1.44px;width:0;height:0;border-left:7.20px solid transparent;border-right:7.20px solid transparent;border-bottom:13.50px solid #4a5d8c"></span></span><span class="ch" style="width:19.425px;transform:scale(0.9,1.06);transform-origin:8.5px 60%">乘</span><span class="ch" style="width:19.425px;transform:scale(0.9,1.06);transform-origin:8.5px 60%">坐</span><span class="ch" style="width:19.425px;transform:scale(0.9,1.06);transform-origin:8.5px 60%">交</span><span class="ch" style="width:19.425px;transform:scale(0.9,1.06);transform-origin:8.5px 60%">通</span><span class="ch" style="width:19.425px;transform:scale(0.9,1.06);transform-origin:8.5px 60%">工</span><span class="ch" style="width:19.425px;transform:scale(0.9,1.06);transform-origin:8.5px 60%">具</span><span class="ch" style="width:19.425px;transform:scale(0.9,1.06);transform-origin:8.5px 60%">：</span><span class="ch" style="width:19.425px;transform:scale(0.9,1.06);transform-origin:8.5px 60%">乘</span><span class="ch" style="width:19.425px;transform:scale(0.9,1.06);transform-origin:8.5px 60%">坐</span><span class="ch" style="width:19.425px;transform:scale(0.9,1.06);transform-origin:8.5px 60%">市</span><span class="ch" style="width:19.425px;transform:scale(0.9,1.06);transform-origin:8.5px 60%">内</span><span class="ch" style="width:19.425px;transform:scale(0.9,1.06);transform-origin:8.5px 60%">公</span><span class="ch" style="width:19.425px;transform:scale(0.9,1.06);transform-origin:8.5px 60%">共</span><span class="ch" style="width:19.425px;transform:scale(0.9,1.06);transform-origin:8.5px 60%">交</span><span class="ch" style="width:19.425px;transform:scale(0.9,1.06);transform-origin:8.5px 60%">通</span><span class="ch" style="width:19.425px;transform:scale(0.9,1.06);transform-origin:8.5px 60%">等</span><span class="ch" style="width:19.425px;transform:scale(0.9,1.06);transform-origin:8.5px 60%">车</span><span class="ch" style="width:19.425px;transform:scale(0.9,1.06);transform-origin:8.5px 60%">停</span><span class="ch" style="width:19.425px;transform:scale(0.9,1.06);transform-origin:8.5px 60%">稳</span><span class="ch" style="width:19.425px;transform:scale(0.9,1.06);transform-origin:8.5px 60%">后</span><span class="ch" style="width:19.425px;transform:scale(0.9,1.06);transform-origin:8.5px 60%">，</span><span class="ch" style="width:19.425px;transform:scale(0.9,1.06);transform-origin:8.5px 60%">依</span><span class="ch" style="width:19.425px;transform:scale(0.9,1.06);transform-origin:8.5px 60%">次</span><span class="ch" style="width:19.425px;transform:scale(0.9,1.06);transform-origin:8.5px 60%">上</span><span class="ch" style="width:19.425px;transform:scale(0.9,1.06);transform-origin:8.5px 60%">车</span><span class="ch" style="width:19.425px;transform:scale(0.9,1.06);transform-origin:8.5px 60%">，</span><span class="ch" style="width:19.425px;transform:scale(0.9,1.06);transform-origin:8.5px 60%">不</span><span class="ch" style="width:19.425px;transform:scale(0.9,1.06);transform-origin:8.5px 60%">挤</span><span class="ch" style="width:19.425px;transform:scale(0.9,1.06);transform-origin:8.5px 60%">不</span></div><div class="t" style="left:139.50px;top:387.92px;font-size:18px;font-weight:bold;color:#4a5d8c"><span class="ch" style="width:19.425px;transform:scale(0.9,1.06);transform-origin:8.5px 60%">抢</span><span class="ch" style="width:19.425px;transform:scale(0.9,1.06);transform-origin:8.5px 60%">。</span><span class="ch" style="width:19.425px;transform:scale(0.9,1.06);transform-origin:8.5px 60%">车</span><span class="ch" style="width:19.425px;transform:scale(0.9,1.06);transform-origin:8.5px 60%">辆</span><span class="ch" style="width:19.425px;transform:scale(0.9,1.06);transform-origin:8.5px 60%">行</span><span class="ch" style="width:19.425px;transform:scale(0.9,1.06);transform-origin:8.5px 60%">驶</span><span class="ch" style="width:19.425px;transform:scale(0.9,1.06);transform-origin:8.5px 60%">中</span><span class="ch" style="width:19.425px;transform:scale(0.9,1.06);transform-origin:8.5px 60%">不</span><span class="ch" style="width:19.425px;transform:scale(0.9,1.06);transform-origin:8.5px 60%">得</span><span class="ch" style="width:19.425px;transform:scale(0.9,1.06);transform-origin:8.5px 60%">把</span><span class="ch" style="width:19.425px;transform:scale(0.9,1.06);transform-origin:8.5px 60%">身</span><span class="ch" style="width:19.425px;transform:scale(0.9,1.06);transform-origin:8.5px 60%">体</span><span class="ch" style="width:19.425px;transform:scale(0.9,1.06);transform-origin:8.5px 60%">伸</span><span class="ch" style="width:19.425px;transform:scale(0.9,1.06);transform-origin:8.5px 60%">出</span><span class="ch" style="width:19.425px;transform:scale(0.9,1.06);transform-origin:8.5px 60%">窗</span><span class="ch" style="width:19.425px;transform:scale(0.9,1.06);transform-origin:8.5px 60%">外</span><span class="ch" style="width:19.425px;transform:scale(0.9,1.06);transform-origin:8.5px 60%">；</span><span class="ch" style="width:19.425px;transform:scale(0.9,1.06);transform-origin:8.5px 60%">乘</span><span class="ch" style="width:19.425px;transform:scale(0.9,1.06);transform-origin:8.5px 60%">坐</span><span class="ch" style="width:19.425px;transform:scale(0.9,1.06);transform-origin:8.5px 60%">长</span><span class="ch" style="width:19.425px;transform:scale(0.9,1.06);transform-origin:8.5px 60%">途</span><span class="ch" style="width:19.425px;transform:scale(0.9,1.06);transform-origin:8.5px 60%">客</span><span class="ch" style="width:19.425px;transform:scale(0.9,1.06);transform-origin:8.5px 60%">车</span><span class="ch" style="width:19.425px;transform:scale(0.9,1.06);transform-origin:8.5px 60%">、</span><span class="ch" style="width:19.425px;transform:scale(0.9,1.06);transform-origin:8.5px 60%">中</span><span class="ch" style="width:19.425px;transform:scale(0.9,1.06);transform-origin:8.5px 60%">巴</span><span class="ch" style="width:19.425px;transform:scale(0.9,1.06);transform-origin:8.5px 60%">车</span><span class="ch" style="width:19.425px;transform:scale(0.9,1.06);transform-origin:8.5px 60%">时</span><span class="ch" style="width:19.425px;transform:scale(0.9,1.06);transform-origin:8.5px 60%">不</span><span class="ch" style="width:19.425px;transform:scale(0.9,1.06);transform-origin:8.5px 60%">能</span><span class="ch" style="width:19.425px;transform:scale(0.9,1.06);transform-origin:8.5px 60%">贪</span><span class="ch" style="width:19.425px;transform:scale(0.9,1.06);transform-origin:8.5px 60%">图</span><span class="ch" style="width:19.425px;transform:scale(0.9,1.06);transform-origin:8.5px 60%">便</span></div><div class="t" style="left:139.50px;top:418.48px;font-size:18px;font-weight:bold;color:#4a5d8c"><span class="ch" style="width:19.425px;transform:scale(0.9,1.06);transform-origin:8.5px 60%">宜</span><span class="ch" style="width:19.425px;transform:scale(0.9,1.06);transform-origin:8.5px 60%">，</span><span class="ch" style="width:19.425px;transform:scale(0.9,1.06);transform-origin:8.5px 60%">乘</span><span class="ch" style="width:19.425px;transform:scale(0.9,1.06);transform-origin:8.5px 60%">坐</span><span class="ch" style="width:19.425px;transform:scale(0.9,1.06);transform-origin:8.5px 60%">车</span><span class="ch" style="width:19.425px;transform:scale(0.9,1.06);transform-origin:8.5px 60%">况</span><span class="ch" style="width:19.425px;transform:scale(0.9,1.06);transform-origin:8.5px 60%">不</span><span class="ch" style="width:19.425px;transform:scale(0.9,1.06);transform-origin:8.5px 60%">好</span><span class="ch" style="width:19.425px;transform:scale(0.9,1.06);transform-origin:8.5px 60%">的</span><span class="ch" style="width:19.425px;transform:scale(0.9,1.06);transform-origin:8.5px 60%">车</span><span class="ch" style="width:19.425px;transform:scale(0.9,1.06);transform-origin:8.5px 60%">，</span><span class="ch" style="width:19.425px;transform:scale(0.9,1.06);transform-origin:8.5px 60%">不</span><span class="ch" style="width:19.425px;transform:scale(0.9,1.06);transform-origin:8.5px 60%">要</span><span class="ch" style="width:19.425px;transform:scale(0.9,1.06);transform-origin:8.5px 60%">乘</span><span class="ch" style="width:19.425px;transform:scale(0.9,1.06);transform-origin:8.5px 60%">坐</span><span class="ch" style="width:19.425px;text-align:right;padding-right:2px">“</span><span class="ch" style="width:19.425px;transform:scale(0.9,1.06);transform-origin:8.5px 60%">黑</span><span class="ch" style="width:19.425px;transform:scale(0.9,1.06);transform-origin:8.5px 60%">巴</span><span class="ch" style="width:19.425px;padding-left:1px">”</span><span class="ch" style="width:19.425px;transform:scale(0.9,1.06);transform-origin:8.5px 60%">、</span><span class="ch" style="width:19.425px;text-align:right;padding-right:2px">“</span><span class="ch" style="width:19.425px;transform:scale(0.9,1.06);transform-origin:8.5px 60%">摩</span><span class="ch" style="width:19.425px;transform:scale(0.9,1.06);transform-origin:8.5px 60%">的</span><span class="ch" style="width:19.425px;padding-left:1px">”</span><span class="ch" style="width:19.425px;transform:scale(0.9,1.06);transform-origin:8.5px 60%">。</span><span class="ch" style="width:19.425px;transform:scale(0.9,1.06);transform-origin:8.5px 60%">乘</span><span class="ch" style="width:19.425px;transform:scale(0.9,1.06);transform-origin:8.5px 60%">坐</span><span class="ch" style="width:19.425px;transform:scale(0.9,1.06);transform-origin:8.5px 60%">火</span><span class="ch" style="width:19.425px;transform:scale(0.9,1.06);transform-origin:8.5px 60%">车</span><span class="ch" style="width:19.425px;transform:scale(0.9,1.06);transform-origin:8.5px 60%">、</span><span class="ch" style="width:19.425px;transform:scale(0.9,1.06);transform-origin:8.5px 60%">轮</span><span class="ch" style="width:19.425px;transform:scale(0.9,1.06);transform-origin:8.5px 60%">船</span><span class="ch" style="width:19.425px;transform:scale(0.9,1.06);transform-origin:8.5px 60%">、</span></div><div class="t" style="left:139.50px;top:449.04px;font-size:18px;font-weight:bold;color:#4a5d8c"><span class="ch" style="width:19.425px;transform:scale(0.9,1.06);transform-origin:8.5px 60%">飞</span><span class="ch" style="width:19.425px;transform:scale(0.9,1.06);transform-origin:8.5px 60%">机</span><span class="ch" style="width:19.425px;transform:scale(0.9,1.06);transform-origin:8.5px 60%">时</span><span class="ch" style="width:19.425px;transform:scale(0.9,1.06);transform-origin:8.5px 60%">必</span><span class="ch" style="width:19.425px;transform:scale(0.9,1.06);transform-origin:8.5px 60%">须</span><span class="ch" style="width:19.425px;transform:scale(0.9,1.06);transform-origin:8.5px 60%">遵</span><span class="ch" style="width:19.425px;transform:scale(0.9,1.06);transform-origin:8.5px 60%">守</span><span class="ch" style="width:19.425px;transform:scale(0.9,1.06);transform-origin:8.5px 60%">车</span><span class="ch" style="width:19.425px;transform:scale(0.9,1.06);transform-origin:8.5px 60%">站</span><span class="ch" style="width:19.425px;transform:scale(0.9,1.06);transform-origin:8.5px 60%">、</span><span class="ch" style="width:19.425px;transform:scale(0.9,1.06);transform-origin:8.5px 60%">码</span><span class="ch" style="width:19.425px;transform:scale(0.9,1.06);transform-origin:8.5px 60%">头</span><span class="ch" style="width:19.425px;transform:scale(0.9,1.06);transform-origin:8.5px 60%">和</span><span class="ch" style="width:19.425px;transform:scale(0.9,1.06);transform-origin:8.5px 60%">机</span><span class="ch" style="width:19.425px;transform:scale(0.9,1.06);transform-origin:8.5px 60%">场</span><span class="ch" style="width:19.425px;transform:scale(0.9,1.06);transform-origin:8.5px 60%">的</span><span class="ch" style="width:19.425px;transform:scale(0.9,1.06);transform-origin:8.5px 60%">各</span><span class="ch" style="width:19.425px;transform:scale(0.9,1.06);transform-origin:8.5px 60%">项</span><span class="ch" style="width:19.425px;transform:scale(0.9,1.06);transform-origin:8.5px 60%">安</span><span class="ch" style="width:19.425px;transform:scale(0.9,1.06);transform-origin:8.5px 60%">全</span><span class="ch" style="width:19.425px;transform:scale(0.9,1.06);transform-origin:8.5px 60%">管</span><span class="ch" style="width:19.425px;transform:scale(0.9,1.06);transform-origin:8.5px 60%">理</span><span class="ch" style="width:19.425px;transform:scale(0.9,1.06);transform-origin:8.5px 60%">规</span><span class="ch" style="width:19.425px;transform:scale(0.9,1.06);transform-origin:8.5px 60%">定</span><span class="ch" style="width:19.425px;transform:scale(0.9,1.06);transform-origin:8.5px 60%">。</span></div></div></div></div><div class="t" style="left:13.5px;top:217.5px;font-size:11.5px;color:#e8772e;font-weight:bold;">9</div><svg style="left:12px;top:235px;" width="9" height="8.5" viewBox="0 0 9 8.5" fill="none"><path d="M4.5 0.5 L5.7 3.2 L8.5 3.4 L6.4 5.2 L7.1 8 L4.5 6.5 L1.9 8 L2.6 5.2 L0.5 3.4 L3.3 3.2 Z" stroke="#3a3a3c" stroke-width="1"/></svg><div class="a" style="left:28px;top:357px;width:228px;height:128px;background:#fff;border-radius:5px;overflow:hidden"><div class="a" style="left:39px;top:32px;width:162px;height:77px;border-radius:9px;background:#002060"></div><div class="a" style="left:33px;top:25px;width:162px;height:77px;border-radius:9px;background:#f0f2f6;border:1.2px solid #86a6c8"></div><div class="t" style="left:70px;top:32.5px;font-size:6px;font-weight:bold;color:#0c2a66">•&nbsp;&nbsp;住宿安全事项?</div><div class="t" style="left:69.5px;top:44.5px;font-size:5.75px;color:#56668c">　入住酒店，应了解安全须知、安全出</div><div class="t" style="left:69.5px;top:51.2px;font-size:5.75px;color:#56668c">路和安全防毒的路线；</div><div class="t" style="left:69.5px;top:64.8px;font-size:5.75px;color:#56668c">　不要将自己住宿的酒店、房号随意</div><div class="t" style="left:69.5px;top:71.5px;font-size:5.75px;color:#56668c">告诉陌生人；不要让陌生人或自称送外</div><div class="t" style="left:69.5px;top:78.2px;font-size:5.75px;color:#56668c">卖/维修人员进入房间；出入房间锁好房</div><div class="t" style="left:69.5px;top:85.0px;font-size:5.75px;color:#56668c">门；贵重物品最好放于身边，不要放在</div><div class="t" style="left:69.5px;top:91.8px;font-size:5.75px;color:#56668c">显眼的地方。</div></div><div class="t" style="left:11.5px;top:360.8px;font-size:11.5px;color:#c4c4c4;font-weight:normal;">10</div><svg style="left:12px;top:378px;" width="9" height="8.5" viewBox="0 0 9 8.5" fill="none"><path d="M4.5 0.5 L5.7 3.2 L8.5 3.4 L6.4 5.2 L7.1 8 L4.5 6.5 L1.9 8 L2.6 5.2 L0.5 3.4 L3.3 3.2 Z" stroke="#3a3a3c" stroke-width="1"/></svg></div><div class="a" style="left:272px;top:482px;width:6px;height:152px;background:#4a4a4c;border-radius:3px"></div><svg style="left:131px;top:690px;" width="14" height="14" viewBox="0 0 14 14" fill="none"><line x1="7" y1="0" x2="7" y2="14" stroke="#d0d0d0" stroke-width="1.6"/><line x1="0" y1="7" x2="14" y2="7" stroke="#d0d0d0" stroke-width="1.6"/></svg><div class="a" style="left:325px;top:158px;width:910px;height:512px"><div class="sl"><div class="a" style="left:162px;top:126px;width:680px;height:357px;border-radius:30px;background:#002060"></div><div class="a" style="left:132px;top:102px;width:680px;height:375px;border-radius:30px;background:linear-gradient(180deg,#f3f4f8,#eff1f6);border:1.5px solid #7f9ec0"></div><div class="t" style="left:182px;top:123.5px;font-size:27.3px;font-weight:bold;color:#002060"><span class="ch" style="width:26.7px;transform:scale(1,1);transform-origin:12.7px 60%">遵</span><span class="ch" style="width:26.7px;transform:scale(1,1);transform-origin:12.7px 60%">守</span><span class="ch" style="width:26.7px;transform:scale(1,1);transform-origin:12.7px 60%">交</span><span class="ch" style="width:26.7px;transform:scale(1,1);transform-origin:12.7px 60%">通</span><span class="ch" style="width:26.7px;transform:scale(1,1);transform-origin:12.7px 60%">安</span><span class="ch" style="width:26.7px;transform:scale(1,1);transform-origin:12.7px 60%">全</span><span class="ch" style="width:26.7px;transform:scale(1,1);transform-origin:12.7px 60%">，</span><span class="ch" style="width:26.7px;transform:scale(1,1);transform-origin:12.7px 60%">平</span><span class="ch" style="width:26.7px;transform:scale(1,1);transform-origin:12.7px 60%">安</span><span class="ch" style="width:26.7px;transform:scale(1,1);transform-origin:12.7px 60%">与</span><span class="ch" style="width:26.7px;transform:scale(1,1);transform-origin:12.7px 60%">你</span><span class="ch" style="width:26.7px;transform:scale(1,1);transform-origin:12.7px 60%">同</span><span class="ch" style="width:26.7px;transform:scale(1,1);transform-origin:12.7px 60%">在</span></div><div class="t" style="left:197.78px;top:174.00px;font-size:18px;font-weight:bold;color:#002060"><span class="ch" style="width:19.425px;position:relative">　<span style="position:absolute;left:3.58px;top:1.44px;width:0;height:0;border-left:7.20px solid transparent;border-right:7.20px solid transparent;border-bottom:13.50px solid #002060"></span></span><span class="ch" style="width:19.425px;transform:scale(0.9,1.06);transform-origin:8.5px 60%">不</span><span class="ch" style="width:19.425px;transform:scale(0.9,1.06);transform-origin:8.5px 60%">管</span><span class="ch" style="width:19.425px;transform:scale(0.9,1.06);transform-origin:8.5px 60%">是</span><span class="ch" style="width:19.425px;transform:scale(0.9,1.06);transform-origin:8.5px 60%">校</span><span class="ch" style="width:19.425px;transform:scale(0.9,1.06);transform-origin:8.5px 60%">内</span><span class="ch" style="width:19.425px;transform:scale(0.9,1.06);transform-origin:8.5px 60%">还</span><span class="ch" style="width:19.425px;transform:scale(0.9,1.06);transform-origin:8.5px 60%">是</span><span class="ch" style="width:19.425px;transform:scale(0.9,1.06);transform-origin:8.5px 60%">校</span><span class="ch" style="width:19.425px;transform:scale(0.9,1.06);transform-origin:8.5px 60%">外</span><span class="ch" style="width:19.425px;transform:scale(0.9,1.06);transform-origin:8.5px 60%">，</span><span class="ch" style="width:19.425px;transform:scale(0.9,1.06);transform-origin:8.5px 60%">发</span><span class="ch" style="width:19.425px;transform:scale(0.9,1.06);transform-origin:8.5px 60%">生</span><span class="ch" style="width:19.425px;transform:scale(0.9,1.06);transform-origin:8.5px 60%">交</span><span class="ch" style="width:19.425px;transform:scale(0.9,1.06);transform-origin:8.5px 60%">通</span><span class="ch" style="width:19.425px;transform:scale(0.9,1.06);transform-origin:8.5px 60%">事</span><span class="ch" style="width:19.425px;transform:scale(0.9,1.06);transform-origin:8.5px 60%">故</span><span class="ch" style="width:19.425px;transform:scale(0.9,1.06);transform-origin:8.5px 60%">最</span><span class="ch" style="width:19.425px;transform:scale(0.9,1.06);transform-origin:8.5px 60%">主</span><span class="ch" style="width:19.425px;transform:scale(0.9,1.06);transform-origin:8.5px 60%">要</span><span class="ch" style="width:19.425px;transform:scale(0.9,1.06);transform-origin:8.5px 60%">的</span><span class="ch" style="width:19.425px;transform:scale(0.9,1.06);transform-origin:8.5px 60%">原</span><span class="ch" style="width:19.425px;transform:scale(0.9,1.06);transform-origin:8.5px 60%">因</span><span class="ch" style="width:19.425px;transform:scale(0.9,1.06);transform-origin:8.5px 60%">是</span><span class="ch" style="width:19.425px;transform:scale(0.9,1.06);transform-origin:8.5px 60%">思</span><span class="ch" style="width:19.425px;transform:scale(0.9,1.06);transform-origin:8.5px 60%">想</span><span class="ch" style="width:19.425px;transform:scale(0.9,1.06);transform-origin:8.5px 60%">麻</span><span class="ch" style="width:19.425px;transform:scale(0.9,1.06);transform-origin:8.5px 60%">痹</span><span class="ch" style="width:19.425px;transform:scale(0.9,1.06);transform-origin:8.5px 60%">、</span><span class="ch" style="width:19.425px;transform:scale(0.9,1.06);transform-origin:8.5px 60%">安</span></div><div class="t" style="left:139.50px;top:204.56px;font-size:18px;font-weight:bold;color:#002060"><span class="ch" style="width:19.425px;transform:scale(0.9,1.06);transform-origin:8.5px 60%">全</span><span class="ch" style="width:19.425px;transform:scale(0.9,1.06);transform-origin:8.5px 60%">意</span><span class="ch" style="width:19.425px;transform:scale(0.9,1.06);transform-origin:8.5px 60%">识</span><span class="ch" style="width:19.425px;transform:scale(0.9,1.06);transform-origin:8.5px 60%">淡</span><span class="ch" style="width:19.425px;transform:scale(0.9,1.06);transform-origin:8.5px 60%">薄</span><span class="ch" style="width:19.425px;transform:scale(0.9,1.06);transform-origin:8.5px 60%">。</span></div><div class="t" style="left:197.78px;top:235.12px;font-size:18px;font-weight:bold;color:#002060"><span class="ch" style="width:19.425px;position:relative">　<span style="position:absolute;left:3.58px;top:1.44px;width:0;height:0;border-left:7.20px solid transparent;border-right:7.20px solid transparent;border-bottom:13.50px solid #002060"></span></span><span class="ch" style="width:19.425px;transform:scale(0.9,1.06);transform-origin:8.5px 60%">在</span><span class="ch" style="width:19.425px;transform:scale(0.9,1.06);transform-origin:8.5px 60%">道</span><span class="ch" style="width:19.425px;transform:scale(0.9,1.06);transform-origin:8.5px 60%">路</span><span class="ch" style="width:19.425px;transform:scale(0.9,1.06);transform-origin:8.5px 60%">上</span><span class="ch" style="width:19.425px;transform:scale(0.9,1.06);transform-origin:8.5px 60%">行</span><span class="ch" style="width:19.425px;transform:scale(0.9,1.06);transform-origin:8.5px 60%">走</span><span class="ch" style="width:19.425px;transform:scale(0.9,1.06);transform-origin:8.5px 60%">：</span><span class="ch" style="width:19.425px;transform:scale(0.9,1.06);transform-origin:8.5px 60%">应</span><span class="ch" style="width:19.425px;transform:scale(0.9,1.06);transform-origin:8.5px 60%">走</span><span class="ch" style="width:19.425px;transform:scale(0.9,1.06);transform-origin:8.5px 60%">人</span><span class="ch" style="width:19.425px;transform:scale(0.9,1.06);transform-origin:8.5px 60%">行</span><span class="ch" style="width:19.425px;transform:scale(0.9,1.06);transform-origin:8.5px 60%">道</span><span class="ch" style="width:19.425px;transform:scale(0.9,1.06);transform-origin:8.5px 60%">，</span><span class="ch" style="width:19.425px;transform:scale(0.9,1.06);transform-origin:8.5px 60%">无</span><span class="ch" style="width:19.425px;transform:scale(0.9,1.06);transform-origin:8.5px 60%">人</span><span class="ch" style="width:19.425px;transform:scale(0.9,1.06);transform-origin:8.5px 60%">行</span><span class="ch" style="width:19.425px;transform:scale(0.9,1.06);transform-origin:8.5px 60%">道</span><span class="ch" style="width:19.425px;transform:scale(0.9,1.06);transform-origin:8.5px 60%">时</span><span class="ch" style="width:19.425px;transform:scale(0.9,1.06);transform-origin:8.5px 60%">靠</span><span class="ch" style="width:19.425px;transform:scale(0.9,1.06);transform-origin:8.5px 60%">右</span><span class="ch" style="width:19.425px;transform:scale(0.9,1.06);transform-origin:8.5px 60%">边</span><span class="ch" style="width:19.425px;transform:scale(0.9,1.06);transform-origin:8.5px 60%">行</span><span class="ch" style="width:19.425px;transform:scale(0.9,1.06);transform-origin:8.5px 60%">走</span><span class="ch" style="width:19.425px;transform:scale(0.9,1.06);transform-origin:8.5px 60%">。</span><span class="ch" style="width:19.425px;transform:scale(0.9,1.06);transform-origin:8.5px 60%">走</span><span class="ch" style="width:19.425px;transform:scale(0.9,1.06);transform-origin:8.5px 60%">路</span><span class="ch" style="width:19.425px;transform:scale(0.9,1.06);transform-origin:8.5px 60%">时</span><span class="ch" style="width:19.425px;transform:scale(0.9,1.06);transform-origin:8.5px 60%">要</span><span class="ch" style="width:19.425px;transform:scale(0.9,1.06);transform-origin:8.5px 60%">集</span></div><div class="t" style="left:139.50px;top:265.68px;font-size:18px;font-weight:bold;color:#002060"><span class="ch" style="width:19.425px;transform:scale(0.9,1.06);transform-origin:8.5px 60%">中</span><span class="ch" style="width:19.425px;transform:scale(0.9,1.06);transform-origin:8.5px 60%">精</span><span class="ch" style="width:19.425px;transform:scale(0.9,1.06);transform-origin:8.5px 60%">力</span><span class="ch" style="width:19.425px;transform:scale(0.9,1.06);transform-origin:8.5px 60%">，</span><span class="ch" style="width:19.425px;text-align:right;padding-right:2px">“</span><span class="ch" style="width:19.425px;transform:scale(0.9,1.06);transform-origin:8.5px 60%">眼</span><span class="ch" style="width:19.425px;transform:scale(0.9,1.06);transform-origin:8.5px 60%">观</span><span class="ch" style="width:19.425px;transform:scale(0.9,1.06);transform-origin:8.5px 60%">六</span><span class="ch" style="width:19.425px;transform:scale(0.9,1.06);transform-origin:8.5px 60%">路</span><span class="ch" style="width:19.425px;transform:scale(0.9,1.06);transform-origin:8.5px 60%">，</span><span class="ch" style="width:19.425px;transform:scale(0.9,1.06);transform-origin:8.5px 60%">耳</span><span class="ch" style="width:19.425px;transform:scale(0.9,1.06);transform-origin:8.5px 60%">听</span><span class="ch" style="width:19.425px;transform:scale(0.9,1.06);transform-origin:8.5px 60%">八</span><span class="ch" style="width:19.425px;transform:scale(0.9,1.06);transform-origin:8.5px 60%">方</span><span class="ch" style="width:19.425px;padding-left:1px">”</span><span class="ch" style="width:19.425px;transform:scale(0.9,1.06);transform-origin:8.5px 60%">；</span></div><div class="t" style="left:197.78px;top:296.24px;font-size:18px;font-weight:bold;color:#002060"><span class="ch" style="width:19.425px;position:relative">　<span style="position:absolute;left:3.58px;top:1.44px;width:0;height:0;border-left:7.20px solid transparent;border-right:7.20px solid transparent;border-bottom:13.50px solid #002060"></span></span><span class="ch" style="width:19.425px;transform:scale(0.9,1.06);transform-origin:8.5px 60%">不</span><span class="ch" style="width:19.425px;transform:scale(0.9,1.06);transform-origin:8.5px 60%">与</span><span class="ch" style="width:19.425px;transform:scale(0.9,1.06);transform-origin:8.5px 60%">机</span><span class="ch" style="width:19.425px;transform:scale(0.9,1.06);transform-origin:8.5px 60%">动</span><span class="ch" style="width:19.425px;transform:scale(0.9,1.06);transform-origin:8.5px 60%">车</span><span class="ch" style="width:19.425px;transform:scale(0.9,1.06);transform-origin:8.5px 60%">抢</span><span class="ch" style="width:19.425px;transform:scale(0.9,1.06);transform-origin:8.5px 60%">道</span><span class="ch" style="width:19.425px;transform:scale(0.9,1.06);transform-origin:8.5px 60%">，</span><span class="ch" style="width:19.425px;transform:scale(0.9,1.06);transform-origin:8.5px 60%">不</span><span class="ch" style="width:19.425px;transform:scale(0.9,1.06);transform-origin:8.5px 60%">突</span><span class="ch" style="width:19.425px;transform:scale(0.9,1.06);transform-origin:8.5px 60%">然</span><span class="ch" style="width:19.425px;transform:scale(0.9,1.06);transform-origin:8.5px 60%">横</span><span class="ch" style="width:19.425px;transform:scale(0.9,1.06);transform-origin:8.5px 60%">穿</span><span class="ch" style="width:19.425px;transform:scale(0.9,1.06);transform-origin:8.5px 60%">马</span><span class="ch" style="width:19.425px;transform:scale(0.9,1.06);transform-origin:8.5px 60%">路</span><span class="ch" style="width:19.425px;transform:scale(0.9,1.06);transform-origin:8.5px 60%">、</span><span class="ch" style="width:19.425px;transform:scale(0.9,1.06);transform-origin:8.5px 60%">翻</span><span class="ch" style="width:19.425px;transform:scale(0.9,1.06);transform-origin:8.5px 60%">越</span><span class="ch" style="width:19.425px;transform:scale(0.9,1.06);transform-origin:8.5px 60%">护</span><span class="ch" style="width:19.425px;transform:scale(0.9,1.06);transform-origin:8.5px 60%">拦</span><span class="ch" style="width:19.425px;transform:scale(0.9,1.06);transform-origin:8.5px 60%">，</span><span class="ch" style="width:19.425px;transform:scale(0.9,1.06);transform-origin:8.5px 60%">过</span><span class="ch" style="width:19.425px;transform:scale(0.9,1.06);transform-origin:8.5px 60%">街</span><span class="ch" style="width:19.425px;transform:scale(0.9,1.06);transform-origin:8.5px 60%">走</span><span class="ch" style="width:19.425px;transform:scale(0.9,1.06);transform-origin:8.5px 60%">人</span><span class="ch" style="width:19.425px;transform:scale(0.9,1.06);transform-origin:8.5px 60%">行</span><span class="ch" style="width:19.425px;transform:scale(0.9,1.06);transform-origin:8.5px 60%">横</span><span class="ch" style="width:19.425px;transform:scale(0.9,1.06);transform-origin:8.5px 60%">道</span><span class="ch" style="width:19.425px;transform:scale(0.9,1.06);transform-origin:8.5px 60%">；</span></div><div class="t" style="left:139.50px;top:326.80px;font-size:18px;font-weight:bold;color:#002060"><span class="ch" style="width:19.425px;transform:scale(0.9,1.06);transform-origin:8.5px 60%">不</span><span class="ch" style="width:19.425px;transform:scale(0.9,1.06);transform-origin:8.5px 60%">闯</span><span class="ch" style="width:19.425px;transform:scale(0.9,1.06);transform-origin:8.5px 60%">红</span><span class="ch" style="width:19.425px;transform:scale(0.9,1.06);transform-origin:8.5px 60%">灯</span><span class="ch" style="width:19.425px;transform:scale(0.9,1.06);transform-origin:8.5px 60%">，</span><span class="ch" style="width:19.425px;transform:scale(0.9,1.06);transform-origin:8.5px 60%">不</span><span class="ch" style="width:19.425px;transform:scale(0.9,1.06);transform-origin:8.5px 60%">进</span><span class="ch" style="width:19.425px;transform:scale(0.9,1.06);transform-origin:8.5px 60%">入</span><span class="ch" style="width:19.425px;transform:scale(0.9,1.06);transform-origin:8.5px 60%">标</span><span class="ch" style="width:19.425px;transform:scale(0.9,1.06);transform-origin:8.5px 60%">有</span><span class="ch" style="width:19.425px;text-align:right;padding-right:2px">“</span><span class="ch" style="width:19.425px;transform:scale(0.9,1.06);transform-origin:8.5px 60%">禁</span><span class="ch" style="width:19.425px;transform:scale(0.9,1.06);transform-origin:8.5px 60%">止</span><span class="ch" style="width:19.425px;transform:scale(0.9,1.06);transform-origin:8.5px 60%">行</span><span class="ch" style="width:19.425px;transform:scale(0.9,1.06);transform-origin:8.5px 60%">人</span><span class="ch" style="width:19.425px;transform:scale(0.9,1.06);transform-origin:8.5px 60%">通</span><span class="ch" style="width:19.425px;transform:scale(0.9,1.06);transform-origin:8.5px 60%">行</span><span class="ch" style="width:19.425px;padding-left:1px">”</span><span class="ch" style="width:19.425px;transform:scale(0.9,1.06);transform-origin:8.5px 60%">、</span><span class="ch" style="width:19.425px;text-align:right;padding-right:2px">“</span><span class="ch" style="width:19.425px;transform:scale(0.9,1.06);transform-origin:8.5px 60%">危</span><span class="ch" style="width:19.425px;transform:scale(0.9,1.06);transform-origin:8.5px 60%">险</span><span class="ch" style="width:19.425px;padding-left:1px">”</span><span class="ch" style="width:19.425px;transform:scale(0.9,1.06);transform-origin:8.5px 60%">等</span><span class="ch" style="width:19.425px;transform:scale(0.9,1.06);transform-origin:8.5px 60%">标</span><span class="ch" style="width:19.425px;transform:scale(0.9,1.06);transform-origin:8.5px 60%">志</span><span class="ch" style="width:19.425px;transform:scale(0.9,1.06);transform-origin:8.5px 60%">的</span><span class="ch" style="width:19.425px;transform:scale(0.9,1.06);transform-origin:8.5px 60%">地</span><span class="ch" style="width:19.425px;transform:scale(0.9,1.06);transform-origin:8.5px 60%">方</span><span class="ch" style="width:19.425px;transform:scale(0.9,1.06);transform-origin:8.5px 60%">。</span></div><div class="t" style="left:197.78px;top:357.36px;font-size:18px;font-weight:bold;color:#002060"><span class="ch" style="width:19.425px;position:relative">　<span style="position:absolute;left:3.58px;top:1.44px;width:0;height:0;border-left:7.20px solid transparent;border-right:7.20px solid transparent;border-bottom:13.50px solid #002060"></span></span><span class="ch" style="width:19.425px;transform:scale(0.9,1.06);transform-origin:8.5px 60%">乘</span><span class="ch" style="width:19.425px;transform:scale(0.9,1.06);transform-origin:8.5px 60%">坐</span><span class="ch" style="width:19.425px;transform:scale(0.9,1.06);transform-origin:8.5px 60%">交</span><span class="ch" style="width:19.425px;transform:scale(0.9,1.06);transform-origin:8.5px 60%">通</span><span class="ch" style="width:19.425px;transform:scale(0.9,1.06);transform-origin:8.5px 60%">工</span><span class="ch" style="width:19.425px;transform:scale(0.9,1.06);transform-origin:8.5px 60%">具</span><span class="ch" style="width:19.425px;transform:scale(0.9,1.06);transform-origin:8.5px 60%">：</span><span class="ch" style="width:19.425px;transform:scale(0.9,1.06);transform-origin:8.5px 60%">乘</span><span class="ch" style="width:19.425px;transform:scale(0.9,1.06);transform-origin:8.5px 60%">坐</span><span class="ch" style="width:19.425px;transform:scale(0.9,1.06);transform-origin:8.5px 60%">市</span><span class="ch" style="width:19.425px;transform:scale(0.9,1.06);transform-origin:8.5px 60%">内</span><span class="ch" style="width:19.425px;transform:scale(0.9,1.06);transform-origin:8.5px 60%">公</span><span class="ch" style="width:19.425px;transform:scale(0.9,1.06);transform-origin:8.5px 60%">共</span><span class="ch" style="width:19.425px;transform:scale(0.9,1.06);transform-origin:8.5px 60%">交</span><span class="ch" style="width:19.425px;transform:scale(0.9,1.06);transform-origin:8.5px 60%">通</span><span class="ch" style="width:19.425px;transform:scale(0.9,1.06);transform-origin:8.5px 60%">等</span><span class="ch" style="width:19.425px;transform:scale(0.9,1.06);transform-origin:8.5px 60%">车</span><span class="ch" style="width:19.425px;transform:scale(0.9,1.06);transform-origin:8.5px 60%">停</span><span class="ch" style="width:19.425px;transform:scale(0.9,1.06);transform-origin:8.5px 60%">稳</span><span class="ch" style="width:19.425px;transform:scale(0.9,1.06);transform-origin:8.5px 60%">后</span><span class="ch" style="width:19.425px;transform:scale(0.9,1.06);transform-origin:8.5px 60%">，</span><span class="ch" style="width:19.425px;transform:scale(0.9,1.06);transform-origin:8.5px 60%">依</span><span class="ch" style="width:19.425px;transform:scale(0.9,1.06);transform-origin:8.5px 60%">次</span><span class="ch" style="width:19.425px;transform:scale(0.9,1.06);transform-origin:8.5px 60%">上</span><span class="ch" style="width:19.425px;transform:scale(0.9,1.06);transform-origin:8.5px 60%">车</span><span class="ch" style="width:19.425px;transform:scale(0.9,1.06);transform-origin:8.5px 60%">，</span><span class="ch" style="width:19.425px;transform:scale(0.9,1.06);transform-origin:8.5px 60%">不</span><span class="ch" style="width:19.425px;transform:scale(0.9,1.06);transform-origin:8.5px 60%">挤</span><span class="ch" style="width:19.425px;transform:scale(0.9,1.06);transform-origin:8.5px 60%">不</span></div><div class="t" style="left:139.50px;top:387.92px;font-size:18px;font-weight:bold;color:#002060"><span class="ch" style="width:19.425px;transform:scale(0.9,1.06);transform-origin:8.5px 60%">抢</span><span class="ch" style="width:19.425px;transform:scale(0.9,1.06);transform-origin:8.5px 60%">。</span><span class="ch" style="width:19.425px;transform:scale(0.9,1.06);transform-origin:8.5px 60%">车</span><span class="ch" style="width:19.425px;transform:scale(0.9,1.06);transform-origin:8.5px 60%">辆</span><span class="ch" style="width:19.425px;transform:scale(0.9,1.06);transform-origin:8.5px 60%">行</span><span class="ch" style="width:19.425px;transform:scale(0.9,1.06);transform-origin:8.5px 60%">驶</span><span class="ch" style="width:19.425px;transform:scale(0.9,1.06);transform-origin:8.5px 60%">中</span><span class="ch" style="width:19.425px;transform:scale(0.9,1.06);transform-origin:8.5px 60%">不</span><span class="ch" style="width:19.425px;transform:scale(0.9,1.06);transform-origin:8.5px 60%">得</span><span class="ch" style="width:19.425px;transform:scale(0.9,1.06);transform-origin:8.5px 60%">把</span><span class="ch" style="width:19.425px;transform:scale(0.9,1.06);transform-origin:8.5px 60%">身</span><span class="ch" style="width:19.425px;transform:scale(0.9,1.06);transform-origin:8.5px 60%">体</span><span class="ch" style="width:19.425px;transform:scale(0.9,1.06);transform-origin:8.5px 60%">伸</span><span class="ch" style="width:19.425px;transform:scale(0.9,1.06);transform-origin:8.5px 60%">出</span><span class="ch" style="width:19.425px;transform:scale(0.9,1.06);transform-origin:8.5px 60%">窗</span><span class="ch" style="width:19.425px;transform:scale(0.9,1.06);transform-origin:8.5px 60%">外</span><span class="ch" style="width:19.425px;transform:scale(0.9,1.06);transform-origin:8.5px 60%">；</span><span class="ch" style="width:19.425px;transform:scale(0.9,1.06);transform-origin:8.5px 60%">乘</span><span class="ch" style="width:19.425px;transform:scale(0.9,1.06);transform-origin:8.5px 60%">坐</span><span class="ch" style="width:19.425px;transform:scale(0.9,1.06);transform-origin:8.5px 60%">长</span><span class="ch" style="width:19.425px;transform:scale(0.9,1.06);transform-origin:8.5px 60%">途</span><span class="ch" style="width:19.425px;transform:scale(0.9,1.06);transform-origin:8.5px 60%">客</span><span class="ch" style="width:19.425px;transform:scale(0.9,1.06);transform-origin:8.5px 60%">车</span><span class="ch" style="width:19.425px;transform:scale(0.9,1.06);transform-origin:8.5px 60%">、</span><span class="ch" style="width:19.425px;transform:scale(0.9,1.06);transform-origin:8.5px 60%">中</span><span class="ch" style="width:19.425px;transform:scale(0.9,1.06);transform-origin:8.5px 60%">巴</span><span class="ch" style="width:19.425px;transform:scale(0.9,1.06);transform-origin:8.5px 60%">车</span><span class="ch" style="width:19.425px;transform:scale(0.9,1.06);transform-origin:8.5px 60%">时</span><span class="ch" style="width:19.425px;transform:scale(0.9,1.06);transform-origin:8.5px 60%">不</span><span class="ch" style="width:19.425px;transform:scale(0.9,1.06);transform-origin:8.5px 60%">能</span><span class="ch" style="width:19.425px;transform:scale(0.9,1.06);transform-origin:8.5px 60%">贪</span><span class="ch" style="width:19.425px;transform:scale(0.9,1.06);transform-origin:8.5px 60%">图</span><span class="ch" style="width:19.425px;transform:scale(0.9,1.06);transform-origin:8.5px 60%">便</span></div><div class="t" style="left:139.50px;top:418.48px;font-size:18px;font-weight:bold;color:#002060"><span class="ch" style="width:19.425px;transform:scale(0.9,1.06);transform-origin:8.5px 60%">宜</span><span class="ch" style="width:19.425px;transform:scale(0.9,1.06);transform-origin:8.5px 60%">，</span><span class="ch" style="width:19.425px;transform:scale(0.9,1.06);transform-origin:8.5px 60%">乘</span><span class="ch" style="width:19.425px;transform:scale(0.9,1.06);transform-origin:8.5px 60%">坐</span><span class="ch" style="width:19.425px;transform:scale(0.9,1.06);transform-origin:8.5px 60%">车</span><span class="ch" style="width:19.425px;transform:scale(0.9,1.06);transform-origin:8.5px 60%">况</span><span class="ch" style="width:19.425px;transform:scale(0.9,1.06);transform-origin:8.5px 60%">不</span><span class="ch" style="width:19.425px;transform:scale(0.9,1.06);transform-origin:8.5px 60%">好</span><span class="ch" style="width:19.425px;transform:scale(0.9,1.06);transform-origin:8.5px 60%">的</span><span class="ch" style="width:19.425px;transform:scale(0.9,1.06);transform-origin:8.5px 60%">车</span><span class="ch" style="width:19.425px;transform:scale(0.9,1.06);transform-origin:8.5px 60%">，</span><span class="ch" style="width:19.425px;transform:scale(0.9,1.06);transform-origin:8.5px 60%">不</span><span class="ch" style="width:19.425px;transform:scale(0.9,1.06);transform-origin:8.5px 60%">要</span><span class="ch" style="width:19.425px;transform:scale(0.9,1.06);transform-origin:8.5px 60%">乘</span><span class="ch" style="width:19.425px;transform:scale(0.9,1.06);transform-origin:8.5px 60%">坐</span><span class="ch" style="width:19.425px;text-align:right;padding-right:2px">“</span><span class="ch" style="width:19.425px;transform:scale(0.9,1.06);transform-origin:8.5px 60%">黑</span><span class="ch" style="width:19.425px;transform:scale(0.9,1.06);transform-origin:8.5px 60%">巴</span><span class="ch" style="width:19.425px;padding-left:1px">”</span><span class="ch" style="width:19.425px;transform:scale(0.9,1.06);transform-origin:8.5px 60%">、</span><span class="ch" style="width:19.425px;text-align:right;padding-right:2px">“</span><span class="ch" style="width:19.425px;transform:scale(0.9,1.06);transform-origin:8.5px 60%">摩</span><span class="ch" style="width:19.425px;transform:scale(0.9,1.06);transform-origin:8.5px 60%">的</span><span class="ch" style="width:19.425px;padding-left:1px">”</span><span class="ch" style="width:19.425px;transform:scale(0.9,1.06);transform-origin:8.5px 60%">。</span><span class="ch" style="width:19.425px;transform:scale(0.9,1.06);transform-origin:8.5px 60%">乘</span><span class="ch" style="width:19.425px;transform:scale(0.9,1.06);transform-origin:8.5px 60%">坐</span><span class="ch" style="width:19.425px;transform:scale(0.9,1.06);transform-origin:8.5px 60%">火</span><span class="ch" style="width:19.425px;transform:scale(0.9,1.06);transform-origin:8.5px 60%">车</span><span class="ch" style="width:19.425px;transform:scale(0.9,1.06);transform-origin:8.5px 60%">、</span><span class="ch" style="width:19.425px;transform:scale(0.9,1.06);transform-origin:8.5px 60%">轮</span><span class="ch" style="width:19.425px;transform:scale(0.9,1.06);transform-origin:8.5px 60%">船</span><span class="ch" style="width:19.425px;transform:scale(0.9,1.06);transform-origin:8.5px 60%">、</span></div><div class="t" style="left:139.50px;top:449.04px;font-size:18px;font-weight:bold;color:#002060"><span class="ch" style="width:19.425px;transform:scale(0.9,1.06);transform-origin:8.5px 60%">飞</span><span class="ch" style="width:19.425px;transform:scale(0.9,1.06);transform-origin:8.5px 60%">机</span><span class="ch" style="width:19.425px;transform:scale(0.9,1.06);transform-origin:8.5px 60%">时</span><span class="ch" style="width:19.425px;transform:scale(0.9,1.06);transform-origin:8.5px 60%">必</span><span class="ch" style="width:19.425px;transform:scale(0.9,1.06);transform-origin:8.5px 60%">须</span><span class="ch" style="width:19.425px;transform:scale(0.9,1.06);transform-origin:8.5px 60%">遵</span><span class="ch" style="width:19.425px;transform:scale(0.9,1.06);transform-origin:8.5px 60%">守</span><span class="ch" style="width:19.425px;transform:scale(0.9,1.06);transform-origin:8.5px 60%">车</span><span class="ch" style="width:19.425px;transform:scale(0.9,1.06);transform-origin:8.5px 60%">站</span><span class="ch" style="width:19.425px;transform:scale(0.9,1.06);transform-origin:8.5px 60%">、</span><span class="ch" style="width:19.425px;transform:scale(0.9,1.06);transform-origin:8.5px 60%">码</span><span class="ch" style="width:19.425px;transform:scale(0.9,1.06);transform-origin:8.5px 60%">头</span><span class="ch" style="width:19.425px;transform:scale(0.9,1.06);transform-origin:8.5px 60%">和</span><span class="ch" style="width:19.425px;transform:scale(0.9,1.06);transform-origin:8.5px 60%">机</span><span class="ch" style="width:19.425px;transform:scale(0.9,1.06);transform-origin:8.5px 60%">场</span><span class="ch" style="width:19.425px;transform:scale(0.9,1.06);transform-origin:8.5px 60%">的</span><span class="ch" style="width:19.425px;transform:scale(0.9,1.06);transform-origin:8.5px 60%">各</span><span class="ch" style="width:19.425px;transform:scale(0.9,1.06);transform-origin:8.5px 60%">项</span><span class="ch" style="width:19.425px;transform:scale(0.9,1.06);transform-origin:8.5px 60%">安</span><span class="ch" style="width:19.425px;transform:scale(0.9,1.06);transform-origin:8.5px 60%">全</span><span class="ch" style="width:19.425px;transform:scale(0.9,1.06);transform-origin:8.5px 60%">管</span><span class="ch" style="width:19.425px;transform:scale(0.9,1.06);transform-origin:8.5px 60%">理</span><span class="ch" style="width:19.425px;transform:scale(0.9,1.06);transform-origin:8.5px 60%">规</span><span class="ch" style="width:19.425px;transform:scale(0.9,1.06);transform-origin:8.5px 60%">定</span><span class="ch" style="width:19.425px;transform:scale(0.9,1.06);transform-origin:8.5px 60%">。</span></div></div></div><div class="a" style="left:1278px;top:533px;width:8px;height:45px;background:#4e4e4e;border-radius:3px"></div><div class="a" style="left:285px;top:693px;width:995px;height:1px;background:#29292a;"></div><div class="t" style="left:297px;top:703px;font-size:12.2px;color:#8a8a8a;font-weight:normal;">单击此处添加备注</div><div class="a" style="left:0px;top:724px;width:1280px;height:1px;background:#29292b;"></div><div class="t" style="left:2px;top:731px;font-size:12px;color:#a8a8a8;font-weight:normal;">幻灯片 9 / 11</div><div class="a" style="left:79px;top:731px;width:1px;height:12px;background:#333335;"></div><svg style="left:93px;top:731px;" width="15" height="13" viewBox="0 0 15 13" fill="none"><path d="M5 1 L1 3.5 L2.5 7 L4 6.3 V13 H11 V6.3 L12.5 7 L14 3.5 L10 1 Q7.5 4 5 1 Z" stroke="#a8a8a8" stroke-width="1.1"/></svg><div class="t" style="left:112px;top:731px;font-size:12px;color:#a8a8a8;font-weight:normal;">Office 主题</div><div class="a" style="left:190px;top:731px;width:1px;height:12px;background:#333335;"></div><div class="a" style="left:204px;top:731px;width:12px;height:12px;border-radius:50%;background:#3e9b3a"></div><div class="a" style="left:208px;top:735px;width:4px;height:4px;border-radius:50%;background:#cfe8cc"></div><div class="t" style="left:220px;top:731px;font-size:12px;color:#a8a8a8;font-weight:normal;">本地备份开</div><div class="a" style="left:563px;top:731px;width:1px;height:12px;background:#333335;"></div><svg style="left:579px;top:731px;" width="12" height="13" viewBox="0 0 12 13" fill="none"><path d="M6 1 L11 3.5 V10 L6 12.5 L1 10 V3.5 Z M1 3.5 L6 6 L11 3.5 M6 6 V12.5" stroke="#a8a8a8" stroke-width="1.1"/></svg><div class="t" style="left:596px;top:731px;font-size:12px;color:#a8a8a8;font-weight:normal;">智能美化</div><svg style="left:652px;top:734px;" width="7" height="5" viewBox="0 0 7 5" fill="none"><path d="M0.8 0.8 L3.5 3.6 L6.2 0.8" stroke="#a0a0a0" stroke-width="1.1"/></svg><div class="a" style="left:671px;top:731px;width:1px;height:12px;background:#333335;"></div><svg style="left:688px;top:732px;" width="12" height="10" viewBox="0 0 12 10" fill="none"><line x1="0" y1="1" x2="12" y2="1" stroke="#a8a8a8" stroke-width="1.1"/><line x1="0" y1="5" x2="8" y2="5" stroke="#a8a8a8" stroke-width="1.1"/><line x1="0" y1="9" x2="12" y2="9" stroke="#a8a8a8" stroke-width="1.1"/></svg><div class="t" style="left:705px;top:731px;font-size:12px;color:#a8a8a8;font-weight:normal;">备注</div><svg style="left:736px;top:734px;" width="7" height="5" viewBox="0 0 7 5" fill="none"><path d="M0.8 0.8 L3.5 3.6 L6.2 0.8" stroke="#a0a0a0" stroke-width="1.1"/></svg><svg style="left:761px;top:731px;" width="12" height="13" viewBox="0 0 12 13" fill="none"><path d="M1 1 H11 V9 H5 L1 12 Z" stroke="#a8a8a8" stroke-width="1.1"/></svg><div class="t" style="left:779px;top:731px;font-size:12px;color:#a8a8a8;font-weight:normal;">批注</div><div class="a" style="left:818px;top:731px;width:1px;height:12px;background:#333335;"></div><div class="a" style="left:827px;top:728px;width:23px;height:20px;background:#2e2e30;border-radius:4px"></div><svg style="left:832px;top:732px;" width="13" height="12" viewBox="0 0 13 12" fill="none"><rect x="0.5" y="0.5" width="12" height="11" stroke="#a8a8a8" stroke-width="1.1"/><path d="M4 0.5 V11.5" stroke="#a8a8a8" stroke-width="1.1"/></svg><svg style="left:862px;top:732px;" width="13" height="12" viewBox="0 0 13 12" fill="none"><rect x="0.5" y="0.5" width="5" height="5" stroke="#a8a8a8" stroke-width="1"/><rect x="7.5" y="0.5" width="5" height="5" stroke="#a8a8a8" stroke-width="1"/><rect x="0.5" y="7" width="5" height="5" stroke="#a8a8a8" stroke-width="1"/><rect x="7.5" y="7" width="5" height="5" stroke="#a8a8a8" stroke-width="1"/></svg><svg style="left:893px;top:732px;" width="13" height="12" viewBox="0 0 13 12" fill="none"><path d="M0.5 11 V1 Q3.5 0 6.5 2 Q9.5 0 12.5 1 V11 M6.5 2 V11" stroke="#a8a8a8" stroke-width="1.1"/></svg><div class="a" style="left:919px;top:731px;width:1px;height:12px;background:#333335;"></div><svg style="left:932px;top:731px;" width="16" height="13" viewBox="0 0 16 13" fill="none"><rect x="1" y="4" width="14" height="9" rx="1.5" stroke="#a8a8a8" stroke-width="1.1"/><path d="M5 4 L8 1 L11 4" stroke="#a8a8a8" stroke-width="1.1"/></svg><div class="a" style="left:961px;top:730px;width:19px;height:16px;background:#c9652a;border-radius:3px"></div><svg style="left:967px;top:732px;" width="7" height="9" viewBox="0 0 7 9" fill="none"><path d="M0 0 L7 4.5 L0 9 Z" fill="#1b1b1b"/></svg><svg style="left:987px;top:734px;" width="7" height="5" viewBox="0 0 7 5" fill="none"><path d="M0.8 0.8 L3.5 3.6 L6.2 0.8" stroke="#a0a0a0" stroke-width="1.1"/></svg><div class="a" style="left:1008px;top:731px;width:1px;height:12px;background:#333335;"></div><svg style="left:1022px;top:731px;" width="14" height="13" viewBox="0 0 14 13" fill="none"><path d="M1 4 V1 H4 M10 1 H13 V4 M13 9 V12 H10 M4 12 H1 V9" stroke="#a8a8a8" stroke-width="1.1"/><rect x="4.5" y="4" width="5" height="5" stroke="#a8a8a8" stroke-width="1.1"/></svg><div class="t" style="left:1055px;top:731px;font-size:12px;color:#a8a8a8;font-weight:normal;">100%</div><svg style="left:1100px;top:734px;" width="7" height="5" viewBox="0 0 7 5" fill="none"><path d="M0.8 0.8 L3.5 3.6 L6.2 0.8" stroke="#a0a0a0" stroke-width="1.1"/></svg><div class="a" style="left:1123px;top:734px;width:11px;height:1.5px;background:#a8a8a8;"></div><div class="a" style="left:1147px;top:734.5px;width:100px;height:1px;background:#3a3a3c;"></div><div class="a" style="left:1147px;top:734px;width:51px;height:2px;background:#3c7ae0;"></div><div class="a" style="left:1192px;top:729px;width:12px;height:12px;border-radius:50%;background:#c8c8c8"></div><div class="a" style="left:1195px;top:732px;width:6px;height:6px;border-radius:50%;background:#8a8a8a"></div><svg style="left:1262px;top:729.5px;" width="11" height="11" viewBox="0 0 11 11" fill="none"><line x1="5.5" y1="0" x2="5.5" y2="11" stroke="#c8c8c8" stroke-width="1.4"/><line x1="0" y1="5.5" x2="11" y2="5.5" stroke="#c8c8c8" stroke-width="1.4"/></svg><div class="a" style="left:509px;top:13px;width:210px;height:25px;border-radius:7px;background:#242424;border:1px solid #484848;box-shadow:0 1px 3px rgba(0,0,0,.4)"></div><svg style="left:516px;top:19px;" width="9" height="12" viewBox="0 0 9 12" fill="none"><path d="M1 12 V8.5 M4.5 12 V5 M8 12 V1" stroke="#e6e6e6" stroke-width="1.6"/></svg><div class="t" style="left:531px;top:22px;font-size:11.5px;color:#e6e6e6;font-weight:normal;">您正在共享屏幕</div><div class="a" style="left:619px;top:20px;width:1px;height:12px;background:#48484c;"></div><svg style="left:630px;top:18px;" width="12" height="15" viewBox="0 0 12 15" fill="none"><path d="M0 0 H8 L12 4 V15 H0 Z" fill="#e8e8e8"/><path d="M3 8 H9 M3 11 H9" stroke="#333" stroke-width="1"/><path d="M6 2 V6 M4 4 H8" stroke="#333" stroke-width="1"/></svg><div class="a" style="left:653px;top:20px;width:1px;height:12px;background:#48484c;"></div><div class="a" style="left:662px;top:17px;width:54px;height:18px;border-radius:4px;background:#e1371f"></div><div class="t" style="left:667px;top:22px;font-size:11.3px;color:#fff;font-weight:normal;">结束共享</div><div class="a" style="left:1225px;top:33px;width:50px;height:2px;background:#b5541e;"></div><div class="a" style="left:1114.5px;top:35.5px;width:170px;height:487.5px;background:#2c2e31;border-radius:6px;box-shadow:0 3px 16px rgba(0,0,0,.22)"></div><svg style="left:1126px;top:44px;" width="10" height="16" viewBox="0 0 10 16" fill="none"><rect x="2.5" y="0" width="5" height="11.5" rx="2.5" fill="#e8e8e8"/><path d="M2.5 9 H7.5 V9.5 A2.5 2.5 0 0 1 2.5 9.5 Z" fill="#17c27a"/><path d="M0.8 8.5 A4.2 4.2 0 0 0 9.2 8.5" stroke="#e8e8e8" stroke-width="1.2"/><path d="M5 12.8 V15" stroke="#e8e8e8" stroke-width="1.3"/></svg><div class="a" style="left:1147px;top:44px;width:1px;height:15px;background:#44464a;"></div><div class="t" style="left:1156px;top:46px;font-size:11.7px;color:#e4e4e4;font-weight:normal;">正在讲话</div><div class="t" style="left:1203.5px;top:46px;font-size:12px;color:#e4e4e4;font-weight:normal;">:</div><div class="t" style="left:1215px;top:46px;font-size:11.7px;color:#e4e4e4;font-weight:normal;">苏桂英;</div><div class="a" style="left:1115px;top:69px;width:170px;height:128px;border:2px solid #18c98a;background:#2d2f33"></div><svg style="left:1194px;top:98px" width="71" height="71" viewBox="0 0 71 71">
<defs><clipPath id="cp"><circle cx="35.5" cy="35.5" r="35.5"/></clipPath></defs>
<circle cx="35.5" cy="35.5" r="35.5" fill="#fafafa"/>
<g clip-path="url(#cp)">
<path d="M24 8 C30 3 44 3 52 9 C57 14 58 22 57 30 L54 29 C53 24 50 20 46 19 L36 20 C34 26 33 34 34 42 C36 48 32 52 28 58 C24 62 18 66 12 64 C14 56 16 48 18 40 C19 30 19 16 24 8 Z" fill="#161616"/>
<path d="M26 10 C30 7 36 6 40 8 C36 10 33 14 32 20 C30 16 28 13 26 10 Z" fill="#dcdcdc" opacity=".85"/>
<path d="M12 62 C16 50 20 44 22 36 C22 46 20 54 16 64 Z" fill="#3a3a3a"/>
<path d="M36 21 C40 19 48 19 53 24 L54 30 C53 36 50 41 45 43 C41 43 37 40 36 34 Z" fill="#f6ebe6"/>
<path d="M35 20 C38 16 46 15 50 17 C53 19 55 23 56 29 C52 25 48 22 44 22 C41 22 38 23 35 27 Z" fill="#101010"/>
<ellipse cx="41" cy="29.5" rx="2.2" ry="1.5" fill="#6a6a6a"/><ellipse cx="50" cy="29.5" rx="2.2" ry="1.5" fill="#6a6a6a"/>
<ellipse cx="40.5" cy="34" rx="3" ry="1.8" fill="#f2a3a8" opacity=".85"/>
<ellipse cx="47" cy="37.5" rx="1.8" ry="1.1" fill="#d9303c"/>
<path d="M30 50 C36 46 44 45 48 50 C52 56 52 64 50 71 H28 C27 64 27 56 30 50 Z" fill="#f4f4f4"/>
<path d="M44 50 C46 44 48 41 51 38 L53 41 L60 41 L65 37 C66 42 67 46 65 52 C66 60 63 66 58 71 H46 C48 66 44 58 38 56 C34 55 36 51 44 50 Z" fill="#0c0c0c"/>
<ellipse cx="50.5" cy="46" rx="1.5" ry="1" fill="#c9cf9a"/><ellipse cx="59" cy="48.5" rx="1.5" ry="1" fill="#c9cf9a"/>
<path d="M44 66 C47 64 52 65 54 71 H43 Z" fill="#f0c4c4"/>
<path d="M20 40 C18 50 15 58 10 66" stroke="#777" stroke-width="0.8"/>
</g></svg><div class="a" style="left:1118px;top:176px;width:18px;height:18px;background:#f5870c;"></div><svg style="left:1121px;top:179px;" width="12" height="12" viewBox="0 0 12 12" fill="none"><circle cx="6" cy="3.5" r="2.4" fill="#fff"/><path d="M1.5 11 A4.5 3.5 0 0 1 10.5 11 Z" fill="#fff"/></svg><div class="a" style="left:1136px;top:176px;width:60px;height:18px;background:#1c1d1f;"></div><svg style="left:1143px;top:178px;" width="9" height="14" viewBox="0 0 9 14" fill="none"><rect x="2.5" y="0" width="5" height="11.5" rx="2.5" fill="#e8e8e8"/><path d="M2.5 9 H7.5 V9.5 A2.5 2.5 0 0 1 2.5 9.5 Z" fill="#17c27a"/><path d="M0.8 8.5 A4.2 4.2 0 0 0 9.2 8.5" stroke="#e8e8e8" stroke-width="1.2"/><path d="M5 12.8 V15" stroke="#e8e8e8" stroke-width="1.3"/></svg><div class="t" style="left:1158px;top:179.5px;font-size:11.6px;color:#e8e8e8;font-weight:normal;">苏桂英</div><div class="a" style="left:1114px;top:326px;width:170px;height:1.5px;background:#1f2022;"></div><div class="a" style="left:1194px;top:227px;width:72px;height:72px;border-radius:50%;background:#2566c8"></div><div class="t" style="left:1198.5px;top:249px;font-size:30px;color:#ffffff;font-weight:300;">妈妈</div><div class="a" style="left:1117px;top:306px;width:99px;height:19px;background:#1c1d1f;border-radius:3px"></div><svg style="left:1123px;top:309px;" width="12" height="13" viewBox="0 0 12 13" fill="none"><rect x="3.5" y="0.5" width="5" height="9" rx="2.5" fill="#e6e6e6"/><path d="M1.5 7 A4.5 4.5 0 0 0 10.5 7 M6 11.5 V13" stroke="#e6e6e6" stroke-width="1.1"/><path d="M0.5 12.5 L11.5 1" stroke="#d93b2b" stroke-width="1.4"/></svg><div class="t" style="left:1139px;top:309.5px;font-size:11.6px;color:#e8e8e8;font-weight:normal;">黄倩雯妈妈</div><svg style="left:1199px;top:309px;" width="13" height="12" viewBox="0 0 13 12" fill="none"><path d="M1 10 L2 7 L8 1 L10.5 3.5 L4.5 9.5 Z" fill="#e8e8e8"/><path d="M6 11 H12.5" stroke="#e8e8e8" stroke-width="1.4"/></svg><div class="a" style="left:1114px;top:456.5px;width:170px;height:1.5px;background:#1f2022;"></div><div class="a" style="left:1194px;top:357px;width:72px;height:72px;border-radius:50%;background:#2566c8"></div><div class="t" style="left:1198px;top:379px;font-size:30px;color:#ffffff;font-weight:300;">家长</div><div class="a" style="left:1117px;top:436px;width:82px;height:19px;background:#1c1d1f;border-radius:3px"></div><svg style="left:1123px;top:439px;" width="12" height="13" viewBox="0 0 12 13" fill="none"><rect x="3.5" y="0.5" width="5" height="9" rx="2.5" fill="#e6e6e6"/><path d="M1.5 7 A4.5 4.5 0 0 0 10.5 7 M6 11.5 V13" stroke="#e6e6e6" stroke-width="1.1"/><path d="M0.5 12.5 L11.5 1" stroke="#d93b2b" stroke-width="1.4"/></svg><div class="t" style="left:1139px;top:439.5px;font-size:11.6px;color:#e8e8e8;font-weight:normal;">何永彬家长</div><div class="a" style="left:1114px;top:458px;width:170px;height:65px;overflow:hidden;border-radius:0 0 6px 6px"><div class="a" style="left:80px;top:29px;width:72px;height:72px;border-radius:50%;background:#2566c8"></div><div class="a" style="left:72px;top:43px;width:85px;height:30px;border-radius:6px;background:rgba(110,118,135,.55)"></div><div class="t" style="left:86px;top:50px;font-size:31px;color:rgba(255,255,255,.35);font-weight:normal;">家长</div><svg style="left:102px;top:51px;" width="24" height="10" viewBox="0 0 24 10" fill="none"><path d="M2 2 L12 8 L22 2" stroke="#fff" stroke-width="3" stroke-linecap="round" stroke-linejoin="round"/></svg></div></body></html>
